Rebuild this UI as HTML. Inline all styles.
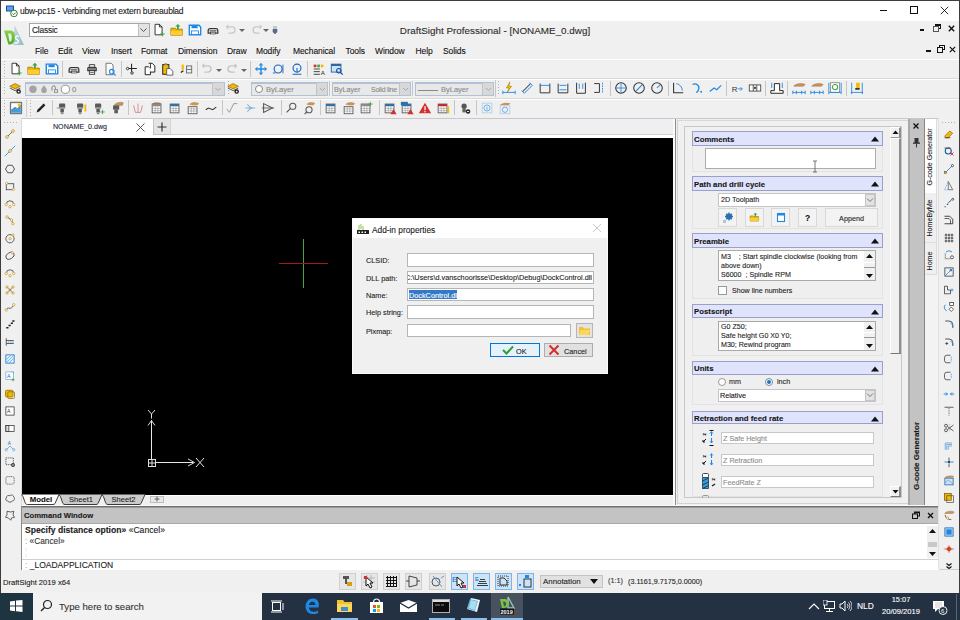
<!DOCTYPE html>
<html><head><meta charset="utf-8">
<style>
*{margin:0;padding:0;box-sizing:border-box}
html,body{width:960px;height:620px;overflow:hidden;background:#f0f0f0;font-family:"Liberation Sans",sans-serif;color:#000}
.a{position:absolute;display:block}
.t{position:absolute;white-space:nowrap;line-height:1;-webkit-text-stroke:0.1px currentColor}
</style></head><body>

<div class="a" style="left:0px;top:0px;width:960px;height:1px;background:#3c3c3c"></div>
<div class="a" style="left:0px;top:0px;width:1px;height:593px;background:#3c3c3c"></div>
<div class="a" style="left:959px;top:0px;width:1px;height:593px;background:#3c3c3c"></div>
<div class="a" style="left:1px;top:1px;width:958px;height:20px;background:#fff"></div>
<svg class="a" style="left:5px;top:5px;" width="13" height="12" viewBox="0 0 13 12"><rect x="1" y="0.5" width="8" height="6" fill="#1f4fa0"/><rect x="2" y="1.5" width="6" height="4" fill="#5aa0e8"/><circle cx="9" cy="8.5" r="3.3" fill="#fff" stroke="#2e7d32" stroke-width="1"/><path d="M7.5 8.5l1.2 1.2 2-2" stroke="#2e7d32" fill="none"/></svg>
<div class="t" style="left:20px;top:6.74px;font-size:8.5px;color:#1a1a1a;letter-spacing:-0.2px">ubw-pc15 - Verbinding met extern bureaublad</div>
<div class="a" style="left:880px;top:10px;width:7px;height:1px;background:#111"></div>
<div class="a" style="left:910px;top:6px;width:8px;height:8px;border:1px solid #111"></div>
<svg class="a" style="left:940px;top:6px;" width="9" height="9" viewBox="0 0 9 9"><path d="M.8 .8l7.4 7.4M8.2 .8L.8 8.2" stroke="#111" stroke-width=".9"/></svg>
<svg class="a" style="left:0px;top:20px;" width="30" height="30" viewBox="0 0 30 30"><defs><linearGradient id="tg" x1="0" y1="0" x2="1" y2="1"><stop offset="0" stop-color="#c4dde2"/><stop offset="1" stop-color="#8fbcc6"/></linearGradient><linearGradient id="dg" x1="0" y1="0" x2="0" y2="1"><stop offset="0" stop-color="#8fd14f"/><stop offset="1" stop-color="#4fa82a"/></linearGradient></defs><path d="M14.5 5L24 25H13.5z" fill="url(#tg)"/><path d="M4 10.5h7c3.5.5 4.5 5 3.8 9-.5 3-2.3 5-5.3 5H8.5z" fill="url(#dg)"/><path d="M8 13.5h2.2c1.8.5 2 5 .8 8H9.5z" fill="#e8f5d8"/><path d="M19 16.5c-1.5-1-4-.5-3.5 1.5s3.5 1.5 3 3.5-3 2-4 1" fill="none" stroke="#eef6f8" stroke-width="1.6"/></svg>
<div class="a" style="left:29px;top:23px;width:121px;height:14px;background:#fff;border:1px solid #a6a6a6"></div>
<div class="a" style="left:138px;top:24px;width:11px;height:12px;background:#e3e3e3;border-left:1px solid #c0c0c0"></div>
<svg class="a" style="left:139px;top:26px;" width="9" height="8" viewBox="0 0 9 8"><path d="M1.5 2.5l3 3 3-3" fill="none" stroke="#555"/></svg>
<div class="t" style="left:32px;top:26.48px;font-size:8.4px;color:#1a1a1a;letter-spacing:-0.2px">Classic</div>
<svg class="a" style="left:152px;top:23px;" width="14" height="14" viewBox="0 0 14 14"><g transform="scale(.875)"><path d="M3.5 1.5h5l3 3v9h-8z" fill="#fff" stroke="#222"/><path d="M8.5 1.5v3h3" fill="none" stroke="#222"/><path d="M12 10v5M9.5 12.5h5" stroke="#43a047" stroke-width="1.2"/></g></svg>
<svg class="a" style="left:170px;top:23px;" width="14" height="14" viewBox="0 0 14 14"><g transform="scale(.875)"><path d="M1 6h5l1 1h7v7H1z" fill="#f5b800" stroke="#8a6d00" stroke-width=".8"/><path d="M1 9h13v5H1z" fill="#ffcc33"/><path d="M9 1l3 3h-2v3H8V4H6z" fill="#43a047"/></g></svg>
<svg class="a" style="left:188px;top:23px;" width="14" height="14" viewBox="0 0 14 14"><g transform="scale(.875)"><path d="M1.5 2.5h11l2 2v9h-13z" fill="#fff" stroke="#1e88e5" stroke-width="1.6"/><rect x="4" y="3" width="7" height="3" fill="#1e88e5"/><rect x="4" y="9" width="8" height="4" fill="#fff" stroke="#1e88e5"/></g></svg>
<svg class="a" style="left:206px;top:23px;" width="14" height="14" viewBox="0 0 14 14"><g transform="scale(.875)"><path d="M4.5 6.5h7a2 2 0 0 1 2 2v3h-11v-3a2 2 0 0 1 2-2z" fill="#fff" stroke="#333" stroke-width="1.4"/><path d="M4 9h8" stroke="#333" stroke-width="1.2"/><rect x="5" y="10.5" width="6" height="2" fill="#fff" stroke="#333" stroke-width=".8"/></g></svg>
<svg class="a" style="left:224px;top:23px;" width="12" height="14" viewBox="0 0 12 14"><g transform="scale(.875)"><path d="M5 4.5h4a3.5 3.5 0 0 1 0 7H5" fill="none" stroke="#c8c8c8" stroke-width="1.5"/><path d="M2 4.5l3-3v6z" fill="#c8c8c8"/></g></svg>
<svg class="a" style="left:238px;top:26px;" width="8" height="8" viewBox="0 0 8 8"><path d="M1 3h6l-3 3z" fill="#666"/></svg>
<svg class="a" style="left:250px;top:23px;" width="12" height="14" viewBox="0 0 12 14"><g transform="scale(.875)"><path d="M11 4.5H7a3.5 3.5 0 0 0 0 7h4" fill="none" stroke="#c8c8c8" stroke-width="1.5"/><path d="M14 4.5l-3-3v6z" fill="#c8c8c8"/></g></svg>
<svg class="a" style="left:262px;top:26px;" width="8" height="8" viewBox="0 0 8 8"><path d="M1 3h6l-3 3z" fill="#666"/></svg>
<svg class="a" style="left:272px;top:26px;" width="6" height="9" viewBox="0 0 6 9"><path d="M1 1h4M1 3h4v3l-2 2-2-2z" fill="#5a6a8a" stroke="#5a6a8a" stroke-width=".6"/></svg>
<div class="t" style="left:495px;top:26.15px;font-size:9.9px;transform:translateX(-50%);color:#2b2b2b">DraftSight Professional - [NONAME_0.dwg]</div>
<div class="a" style="left:920px;top:29px;width:4px;height:2px;background:#111"></div>
<svg class="a" style="left:933px;top:24px;" width="8" height="8" viewBox="0 0 8 8"><rect x="2.5" y="0.5" width="5" height="4" fill="none" stroke="#111"/><rect x="0.5" y="2.5" width="5" height="5" fill="#f0f0f0" stroke="#555"/><rect x="2.5" y="0.5" width="5" height="1.5" fill="#111"/></svg>
<svg class="a" style="left:948px;top:25px;" width="7" height="7" viewBox="0 0 7 7"><path d="M.8 .8l5.4 5.4M6.2 .8L.8 6.2" stroke="#111" stroke-width="1.4"/></svg>
<div class="t" style="left:35px;top:47.13px;font-size:8.5px;color:#111;letter-spacing:-0.1px">File</div>
<div class="t" style="left:58px;top:47.13px;font-size:8.5px;color:#111;letter-spacing:-0.1px">Edit</div>
<div class="t" style="left:82px;top:47.13px;font-size:8.5px;color:#111;letter-spacing:-0.1px">View</div>
<div class="t" style="left:111px;top:47.13px;font-size:8.5px;color:#111;letter-spacing:-0.1px">Insert</div>
<div class="t" style="left:141px;top:47.13px;font-size:8.5px;color:#111;letter-spacing:-0.1px">Format</div>
<div class="t" style="left:178px;top:47.13px;font-size:8.5px;color:#111;letter-spacing:-0.1px">Dimension</div>
<div class="t" style="left:227px;top:47.13px;font-size:8.5px;color:#111;letter-spacing:-0.1px">Draw</div>
<div class="t" style="left:256px;top:47.13px;font-size:8.5px;color:#111;letter-spacing:-0.1px">Modify</div>
<div class="t" style="left:293px;top:47.13px;font-size:8.5px;color:#111;letter-spacing:-0.1px">Mechanical</div>
<div class="t" style="left:345.5px;top:47.13px;font-size:8.5px;color:#111;letter-spacing:-0.1px">Tools</div>
<div class="t" style="left:375px;top:47.13px;font-size:8.5px;color:#111;letter-spacing:-0.1px">Window</div>
<div class="t" style="left:415.5px;top:47.13px;font-size:8.5px;color:#111;letter-spacing:-0.1px">Help</div>
<div class="t" style="left:443px;top:47.13px;font-size:8.5px;color:#111;letter-spacing:-0.1px">Solids</div>
<div class="a" style="left:926px;top:50px;width:5px;height:2px;background:#111"></div>
<svg class="a" style="left:937px;top:45px;" width="8" height="8" viewBox="0 0 8 8"><rect x="2.5" y="0.5" width="5" height="4" fill="none" stroke="#111"/><rect x="0.5" y="2.5" width="5" height="5" fill="#f0f0f0" stroke="#111"/></svg>
<svg class="a" style="left:949px;top:46px;" width="7" height="7" viewBox="0 0 7 7"><path d="M.8 .8l5.4 5.4M6.2 .8L.8 6.2" stroke="#111" stroke-width="1.2"/></svg>
<div class="a" style="left:1px;top:59px;width:958px;height:1px;background:#fff"></div>
<div class="a" style="left:1px;top:78px;width:958px;height:1px;background:#d9d9d9"></div>
<div class="a" style="left:1px;top:79px;width:958px;height:1px;background:#fff"></div>
<div class="a" style="left:1px;top:98px;width:958px;height:1px;background:#d9d9d9"></div>
<div class="a" style="left:1px;top:99px;width:958px;height:1px;background:#fff"></div>
<div class="a" style="left:1px;top:118px;width:958px;height:1px;background:#c8c8c8"></div>
<div class="a" style="left:4px;top:61px;width:1px;height:16px;background:repeating-linear-gradient(#b0b0b0 0 1px,transparent 1px 3px)"></div>
<svg class="a" style="left:8px;top:61px;" width="16" height="16" viewBox="0 0 16 16"><g transform="translate(8 8) scale(0.88) translate(-8 -8)"><path d="M3.5 1.5h5l3 3v9h-8z" fill="#fff" stroke="#222"/><path d="M8.5 1.5v3h3" fill="none" stroke="#222"/><path d="M12 10v5M9.5 12.5h5" stroke="#43a047" stroke-width="1.2"/></g></svg>
<svg class="a" style="left:26px;top:61px;" width="16" height="16" viewBox="0 0 16 16"><g transform="translate(8 8) scale(0.88) translate(-8 -8)"><path d="M1 6h5l1 1h7v7H1z" fill="#f5b800" stroke="#8a6d00" stroke-width=".8"/><path d="M1 9h13v5H1z" fill="#ffcc33"/><path d="M9 1l3 3h-2v3H8V4H6z" fill="#43a047"/></g></svg>
<svg class="a" style="left:44px;top:61px;" width="16" height="16" viewBox="0 0 16 16"><g transform="translate(8 8) scale(0.88) translate(-8 -8)"><path d="M1.5 2.5h11l2 2v9h-13z" fill="#fff" stroke="#1e88e5" stroke-width="1.6"/><rect x="4" y="3" width="7" height="3" fill="#1e88e5"/><rect x="4" y="9" width="8" height="4" fill="#fff" stroke="#1e88e5"/></g></svg>
<div class="a" style="left:62px;top:61px;width:1px;height:16px;background:#c6c6c6"></div>
<svg class="a" style="left:66px;top:61px;" width="16" height="16" viewBox="0 0 16 16"><g transform="translate(8 8) scale(0.88) translate(-8 -8)"><path d="M4.5 6.5h7a2 2 0 0 1 2 2v3h-11v-3a2 2 0 0 1 2-2z" fill="#fff" stroke="#333" stroke-width="1.4"/><path d="M4 9h8" stroke="#333" stroke-width="1.2"/><rect x="5" y="10.5" width="6" height="2" fill="#fff" stroke="#333" stroke-width=".8"/></g></svg>
<svg class="a" style="left:84px;top:61px;" width="16" height="16" viewBox="0 0 16 16"><g transform="translate(8 8) scale(0.88) translate(-8 -8)"><path d="M4.5 5.5h7a2 2 0 0 1 2 2v3h-11v-3a2 2 0 0 1 2-2z" fill="#3a3a3a"/><path d="M5 5.5V3h6v2.5" fill="none" stroke="#333"/><path d="M3.5 8h9" stroke="#fff" stroke-width=".8"/><rect x="5" y="10" width="6" height="4" fill="#fff" stroke="#333"/><path d="M6 12h4" stroke="#333" stroke-width=".8"/></g></svg>
<svg class="a" style="left:102px;top:61px;" width="16" height="16" viewBox="0 0 16 16"><g transform="translate(8 8) scale(0.88) translate(-8 -8)"><path d="M3.5 1.5h6l2 2v11h-8z" fill="#fff" stroke="#666"/><circle cx="10" cy="11" r="2.6" fill="none" stroke="#1e88e5" stroke-width="1.2"/><path d="M12 13l2.5 2.5" stroke="#1e88e5" stroke-width="1.3"/></g></svg>
<div class="a" style="left:121px;top:61px;width:1px;height:16px;background:#c6c6c6"></div>
<svg class="a" style="left:124px;top:61px;" width="16" height="16" viewBox="0 0 16 16"><g transform="translate(8 8) scale(0.88) translate(-8 -8)"><path d="M7.5 2v9M2.5 7.5h11" stroke="#222" stroke-width="1.2"/><circle cx="3" cy="7.5" r="1.4" fill="#fff" stroke="#222"/><circle cx="8" cy="12.5" r="1.4" fill="#fff" stroke="#222"/></g></svg>
<svg class="a" style="left:142px;top:61px;" width="16" height="16" viewBox="0 0 16 16"><g transform="translate(8 8) scale(0.88) translate(-8 -8)"><path d="M2.5 5.5h4l2 2v7h-6z" fill="#fff" stroke="#222" stroke-width="1.1"/><path d="M6.5 1.5h4l3 3v7h-5" fill="#fff" stroke="#222" stroke-width="1.1"/><path d="M8.5 7.5v-6" stroke="#222"/></g></svg>
<svg class="a" style="left:160px;top:61px;" width="16" height="16" viewBox="0 0 16 16"><g transform="translate(8 8) scale(0.88) translate(-8 -8)"><rect x="2" y="3" width="7" height="11" fill="#f5b800" stroke="#222" stroke-width="1.1"/><rect x="4" y="1.5" width="3" height="2" fill="#888"/><path d="M6.5 7.5h4l3 3v4.5h-7z" fill="#fff" stroke="#555" stroke-width="1"/></g></svg>
<svg class="a" style="left:178px;top:61px;" width="16" height="16" viewBox="0 0 16 16"><g transform="translate(8 8) scale(0.88) translate(-8 -8)"><rect x="3" y="3" width="2.5" height="6" fill="#f5b800"/><path d="M2 12l3-2" stroke="#222" stroke-width="1.5"/><rect x="8.5" y="4.5" width="6" height="8" fill="#eee" stroke="#666"/><path d="M8.5 8.5h6" stroke="#666"/></g></svg>
<div class="a" style="left:197px;top:61px;width:1px;height:16px;background:#c6c6c6"></div>
<svg class="a" style="left:199px;top:61px;" width="16" height="16" viewBox="0 0 16 16"><g transform="translate(8 8) scale(0.88) translate(-8 -8)"><path d="M5 4.5h4a3.5 3.5 0 0 1 0 7H5" fill="none" stroke="#c3c3c3" stroke-width="1.5"/><path d="M2 4.5l3-3v6z" fill="#c3c3c3"/></g></svg>
<svg class="a" style="left:215px;top:66px;" width="8" height="8" viewBox="0 0 8 8"><path d="M1 3h6l-3 3z" fill="#666"/></svg>
<svg class="a" style="left:224px;top:61px;" width="16" height="16" viewBox="0 0 16 16"><g transform="translate(8 8) scale(0.88) translate(-8 -8)"><path d="M11 4.5H7a3.5 3.5 0 0 0 0 7h4" fill="none" stroke="#c3c3c3" stroke-width="1.5"/><path d="M14 4.5l-3-3v6z" fill="#c3c3c3"/></g></svg>
<svg class="a" style="left:240px;top:66px;" width="8" height="8" viewBox="0 0 8 8"><path d="M1 3h6l-3 3z" fill="#666"/></svg>
<div class="a" style="left:250px;top:61px;width:1px;height:16px;background:#c6c6c6"></div>
<svg class="a" style="left:253px;top:61px;" width="16" height="16" viewBox="0 0 16 16"><g transform="translate(8 8) scale(0.88) translate(-8 -8)"><path d="M8 1l2.5 3h-5zM8 15l2.5-3h-5zM1 8l3-2.5v5zM15 8l-3-2.5v5z" fill="#1e88e5"/><path d="M8 4v8M4 8h8" stroke="#1e88e5" stroke-width="1.6"/></g></svg>
<svg class="a" style="left:271px;top:61px;" width="16" height="16" viewBox="0 0 16 16"><g transform="translate(8 8) scale(0.88) translate(-8 -8)"><circle cx="7" cy="8" r="4.5" fill="none" stroke="#1565c0" stroke-width="1.3"/><path d="M12.5 3v10M1 12.5h3" stroke="#1565c0"/></g></svg>
<svg class="a" style="left:289px;top:61px;" width="16" height="16" viewBox="0 0 16 16"><g transform="translate(8 8) scale(0.88) translate(-8 -8)"><circle cx="8" cy="7" r="4.5" fill="none" stroke="#1565c0" stroke-width="1.3"/><path d="M3 14h10M8 7v4" stroke="#1565c0" stroke-width="1.2"/></g></svg>
<div class="a" style="left:307px;top:61px;width:1px;height:16px;background:#c6c6c6"></div>
<svg class="a" style="left:311px;top:61px;" width="16" height="16" viewBox="0 0 16 16"><g transform="translate(8 8) scale(0.88) translate(-8 -8)"><rect x="2" y="3" width="3" height="3" fill="#d32f2f"/><rect x="6" y="3" width="3" height="3" fill="#43a047"/><rect x="10" y="3" width="3" height="3" fill="#f5b800"/><path d="M2 8h7M2 11h7M2 14h7" stroke="#333"/><text x="10" y="15" font-size="7" font-family="Liberation Sans" fill="#222">A</text></g></svg>
<svg class="a" style="left:329px;top:61px;" width="16" height="16" viewBox="0 0 16 16"><g transform="translate(8 8) scale(0.88) translate(-8 -8)"><rect x="1.5" y="2.5" width="11" height="9" fill="#cfe3f7" stroke="#1f5f9f"/><rect x="1.5" y="2.5" width="11" height="2" fill="#1f5f9f"/><circle cx="10" cy="10" r="2.5" fill="none" stroke="#0d47a1" stroke-width="1.2"/><path d="M12 12l2.5 2.5" stroke="#0d47a1" stroke-width="1.3"/></g></svg>
<div class="a" style="left:4px;top:81px;width:1px;height:15px;background:repeating-linear-gradient(#b0b0b0 0 1px,transparent 1px 3px)"></div>
<svg class="a" style="left:8px;top:80px;" width="16" height="16" viewBox="0 0 16 16"><g transform="translate(8 8) scale(0.88) translate(-8 -8)"><path d="M1 6l6-3 6 3-6 3z" fill="#f5b800" stroke="#7a5c00" stroke-width=".7"/><path d="M1 8l6 3 6-3" fill="none" stroke="#444"/><circle cx="11" cy="12" r="2.6" fill="#222"/><circle cx="11" cy="12" r="1" fill="#fff"/></g></svg>
<div class="a" style="left:25px;top:82px;width:200px;height:14px;background:#e8e8e8;border:1px solid #b2c2d6;border-top-width:2px"></div>
<div class="a" style="left:212px;top:83px;width:12px;height:12px;background:#d8d8d8;border-left:1px solid #c3c3c3"></div>
<svg class="a" style="left:213px;top:85px;" width="10" height="8" viewBox="0 0 10 8"><path d="M2.5 3l2.5 2.5L7.5 3" fill="none" stroke="#aaa"/></svg>
<svg class="a" style="left:27px;top:83px;" width="45" height="12" viewBox="0 0 45 12"><circle cx="6" cy="6.3" r="3.7" fill="#a3a3a3"/><path d="M17 2.3c-2 2.5-2.8 3.6-2.8 5a2.8 2.8 0 0 0 5.6 0c0-1.4-.8-2.5-2.8-5z" fill="#a3a3a3"/><path d="M25 7.5V4.5a1.7 1.7 0 0 1 3.4 0v1.5" fill="none" stroke="#777" stroke-width=".9"/><rect x="27" y="6.2" width="4" height="3.6" fill="#8a8a8a"/><rect x="27.8" y="7" width="2.4" height="2" fill="#ddd"/><circle cx="38.4" cy="6.3" r="4.1" fill="#fff" stroke="#888" stroke-width=".9"/></svg>
<div class="t" style="left:72px;top:86.08px;font-size:7.8px;color:#888">0</div>
<div class="a" style="left:228px;top:81px;width:1px;height:15px;background:repeating-linear-gradient(#b0b0b0 0 1px,transparent 1px 3px)"></div>
<svg class="a" style="left:226px;top:80px;" width="16" height="16" viewBox="0 0 16 16"><g transform="translate(8 8) scale(0.88) translate(-8 -8)"><path d="M1 6l6-3 6 3-6 3z" fill="#f5b800" stroke="#7a5c00" stroke-width=".7"/><path d="M1 8l6 3 6-3" fill="none" stroke="#444"/><circle cx="11" cy="12" r="2.6" fill="#222"/><circle cx="11" cy="12" r="1" fill="#fff"/></g></svg>
<div class="a" style="left:251px;top:82px;width:77px;height:14px;background:#e8e8e8;border:1px solid #b2c2d6;border-top-width:2px"></div>
<div class="a" style="left:316px;top:83px;width:11px;height:12px;background:#d8d8d8;border-left:1px solid #c3c3c3"></div>
<svg class="a" style="left:254px;top:84px;" width="10" height="10" viewBox="0 0 10 10"><circle cx="5" cy="5" r="3.5" fill="#fff" stroke="#888"/></svg>
<div class="t" style="left:266px;top:86.18px;font-size:7.6px;color:#888">ByLayer</div>
<div class="a" style="left:332px;top:82px;width:79px;height:14px;background:#e8e8e8;border:1px solid #b2c2d6;border-top-width:2px"></div>
<div class="a" style="left:399px;top:83px;width:11px;height:12px;background:#d8d8d8;border-left:1px solid #c3c3c3"></div>
<div class="t" style="left:334px;top:86.37px;font-size:7.2px;color:#888">ByLayer</div>
<div class="t" style="left:371px;top:86.47px;font-size:7.0px;color:#888;letter-spacing:-0.25px">Solid line</div>
<div class="a" style="left:415px;top:82px;width:79px;height:14px;background:#e8e8e8;border:1px solid #b2c2d6;border-top-width:2px"></div>
<div class="a" style="left:482px;top:83px;width:11px;height:12px;background:#d8d8d8;border-left:1px solid #c3c3c3"></div>
<div class="a" style="left:418px;top:90px;width:20px;height:1px;background:#888"></div>
<div class="t" style="left:441px;top:86.23px;font-size:7.5px;color:#888">ByLayer</div>
<svg class="a" style="left:318px;top:85px;" width="9" height="8" viewBox="0 0 9 8"><path d="M2 3l2.5 2.5L7 3" fill="none" stroke="#aaa"/></svg>
<svg class="a" style="left:401px;top:85px;" width="9" height="8" viewBox="0 0 9 8"><path d="M2 3l2.5 2.5L7 3" fill="none" stroke="#aaa"/></svg>
<svg class="a" style="left:484px;top:85px;" width="9" height="8" viewBox="0 0 9 8"><path d="M2 3l2.5 2.5L7 3" fill="none" stroke="#aaa"/></svg>
<div class="a" style="left:329px;top:81px;width:1px;height:15px;background:#c6c6c6"></div>
<div class="a" style="left:412px;top:81px;width:1px;height:15px;background:#c6c6c6"></div>
<div class="a" style="left:495px;top:80px;width:1px;height:17px;background:#c6c6c6"></div>
<div class="a" style="left:498px;top:81px;width:1px;height:15px;background:repeating-linear-gradient(#b0b0b0 0 1px,transparent 1px 3px)"></div>
<svg class="a" style="left:501px;top:80px;" width="16" height="16" viewBox="0 0 16 16"><g transform="translate(8 8) scale(0.88) translate(-8 -8)"><path d="M9 1L5 8h3l-2 5 5-7H8z" fill="#f5b800" stroke="#8a6d00" stroke-width=".5"/><path d="M1 13h14M1 11v4M15 11v4" stroke="#1e88e5"/></g></svg>
<svg class="a" style="left:519px;top:80px;" width="16" height="16" viewBox="0 0 16 16"><g transform="translate(8 8) scale(0.88) translate(-8 -8)"><path d="M3 12L12 3" stroke="#555" stroke-width="1.2"/><path d="M5 14l9-9M2 11l3 3M11 2l3 3" stroke="#1e88e5" stroke-width="1.1"/></g></svg>
<svg class="a" style="left:537px;top:80px;" width="16" height="16" viewBox="0 0 16 16"><g transform="translate(8 8) scale(0.88) translate(-8 -8)"><path d="M2.5 3v10.5h11V3" fill="none" stroke="#333" stroke-width="1.1"/><path d="M3 5h10M3 4v2M13 4v2" stroke="#1e88e5"/></g></svg>
<svg class="a" style="left:555px;top:80px;" width="16" height="16" viewBox="0 0 16 16"><g transform="translate(8 8) scale(0.88) translate(-8 -8)"><path d="M2.5 3v10.5h11V3" fill="none" stroke="#333" stroke-width="1.1"/><path d="M4 5h8M4 10h8" stroke="#1e88e5"/></g></svg>
<svg class="a" style="left:573px;top:80px;" width="16" height="16" viewBox="0 0 16 16"><g transform="translate(8 8) scale(0.88) translate(-8 -8)"><path d="M3 2v12h10V2" fill="none" stroke="#333" stroke-width="1.1"/><path d="M6 3v6M10 3v6" stroke="#1e88e5"/></g></svg>
<svg class="a" style="left:591px;top:80px;" width="16" height="16" viewBox="0 0 16 16"><g transform="translate(8 8) scale(0.88) translate(-8 -8)"><path d="M2.5 3h6v10h-6" fill="none" stroke="#333" stroke-width="1.1"/><path d="M12 2v12" stroke="#1e88e5" stroke-dasharray="2 1"/></g></svg>
<div class="a" style="left:610px;top:81px;width:1px;height:15px;background:#c6c6c6"></div>
<svg class="a" style="left:613px;top:80px;" width="16" height="16" viewBox="0 0 16 16"><g transform="translate(8 8) scale(0.88) translate(-8 -8)"><circle cx="8" cy="8" r="6" fill="none" stroke="#333" stroke-width="1.2"/><path d="M8 2.5v11M2.5 8h11" stroke="#1e88e5" stroke-width="1"/></g></svg>
<svg class="a" style="left:631px;top:80px;" width="16" height="16" viewBox="0 0 16 16"><g transform="translate(8 8) scale(0.88) translate(-8 -8)"><circle cx="8" cy="8" r="6" fill="none" stroke="#333" stroke-width="1.2"/><path d="M4.5 11.5l7-7" stroke="#1e88e5" stroke-width="1.2"/></g></svg>
<svg class="a" style="left:649px;top:80px;" width="16" height="16" viewBox="0 0 16 16"><g transform="translate(8 8) scale(0.88) translate(-8 -8)"><circle cx="8" cy="8" r="6" fill="none" stroke="#333" stroke-width="1.2"/><path d="M8 8l3.5-3.5" stroke="#1e88e5" stroke-width="1.2"/></g></svg>
<div class="a" style="left:668px;top:81px;width:1px;height:15px;background:#c6c6c6"></div>
<svg class="a" style="left:670px;top:80px;" width="16" height="16" viewBox="0 0 16 16"><g transform="translate(8 8) scale(0.88) translate(-8 -8)"><path d="M3 2v11.5h11" fill="none" stroke="#333" stroke-width="1.2"/><path d="M6 3a9 9 0 0 1 7 8" fill="none" stroke="#1e88e5"/></g></svg>
<svg class="a" style="left:689px;top:80px;" width="16" height="16" viewBox="0 0 16 16"><g transform="translate(8 8) scale(0.88) translate(-8 -8)"><path d="M3 4c4-2 8 1 7 5s-3 4-3 4" fill="none" stroke="#1e88e5" stroke-width="1.5"/><path d="M11 12l3-1-1 3z" fill="#1e88e5"/></g></svg>
<svg class="a" style="left:707px;top:80px;" width="16" height="16" viewBox="0 0 16 16"><g transform="translate(8 8) scale(0.88) translate(-8 -8)"><path d="M2 12l5-4 3 2 5-5" fill="none" stroke="#1e88e5" stroke-width="1.3"/></g></svg>
<div class="a" style="left:726px;top:81px;width:1px;height:15px;background:#c6c6c6"></div>
<svg class="a" style="left:729px;top:80px;" width="16" height="16" viewBox="0 0 16 16"><g transform="translate(8 8) scale(0.88) translate(-8 -8)"><text x="2" y="12" font-size="9" font-family="Liberation Sans" fill="#333">R</text><path d="M9 9h5M12 7l2 2-2 2" fill="none" stroke="#1e88e5"/></g></svg>
<svg class="a" style="left:747px;top:80px;" width="16" height="16" viewBox="0 0 16 16"><g transform="translate(8 8) scale(0.88) translate(-8 -8)"><rect x="1.5" y="4.5" width="13" height="7" fill="#fff" stroke="#444"/><path d="M6 4.5v7M10 4.5v7" stroke="#444"/><circle cx="8" cy="8" r="1.3" fill="#444"/></g></svg>
<div class="a" style="left:765px;top:81px;width:1px;height:15px;background:#c6c6c6"></div>
<svg class="a" style="left:769px;top:80px;" width="16" height="16" viewBox="0 0 16 16"><g transform="translate(8 8) scale(0.88) translate(-8 -8)"><path d="M1 14h14v-3h-4V3H5v8H1z" fill="#fff" stroke="#222" stroke-width="1.1"/><path d="M2 2v6M14 2v6" stroke="#1e88e5"/></g></svg>
<div class="a" style="left:787px;top:81px;width:1px;height:15px;background:#c6c6c6"></div>
<svg class="a" style="left:791px;top:80px;" width="16" height="16" viewBox="0 0 16 16"><g transform="translate(8 8) scale(0.88) translate(-8 -8)"><path d="M2 6c2-3 9-4 13-2l-2 2H7z" fill="#c9935a" stroke="#8d6a3e" stroke-width=".5"/><path d="M1 13h14M1 11v4M15 11v4M5 11v4M11 11v4" stroke="#1e88e5"/></g></svg>
<svg class="a" style="left:809px;top:80px;" width="16" height="16" viewBox="0 0 16 16"><g transform="translate(8 8) scale(0.88) translate(-8 -8)"><path d="M2 6c2-3 9-4 13-2l-2 2H7z" fill="#c9935a" stroke="#8d6a3e" stroke-width=".5"/><path d="M1 13h14M1 11v4M15 11v4M5 11v4M11 11v4" stroke="#1e88e5"/></g></svg>
<svg class="a" style="left:827px;top:80px;" width="16" height="16" viewBox="0 0 16 16"><g transform="translate(8 8) scale(0.88) translate(-8 -8)"><rect x="3" y="2" width="10" height="11" fill="#fff" stroke="#888"/><circle cx="8" cy="7" r="3" fill="none" stroke="#43a047" stroke-width="1.2"/><path d="M1 13h14M1 2v13M15 2v13" stroke="#1e88e5"/></g></svg>
<div class="a" style="left:846px;top:81px;width:1px;height:15px;background:#c6c6c6"></div>
<svg class="a" style="left:849px;top:80px;" width="16" height="16" viewBox="0 0 16 16"><g transform="translate(8 8) scale(0.88) translate(-8 -8)"><rect x="7" y="2" width="4" height="6" fill="#f5b800"/><rect x="6" y="8" width="5" height="2" fill="#333"/><path d="M1 13h14M2 2v13M14 2v13" stroke="#1e88e5"/></g></svg>
<div class="a" style="left:4px;top:100px;width:1px;height:16px;background:repeating-linear-gradient(#b0b0b0 0 1px,transparent 1px 3px)"></div>
<svg class="a" style="left:8px;top:100px;" width="16" height="16" viewBox="0 0 16 16"><g transform="translate(8 8) scale(0.88) translate(-8 -8)"><rect x="1" y="1" width="14" height="14" rx="1" fill="#777"/><rect x="2.5" y="2.5" width="11" height="11" fill="#fff"/><path d="M2.5 13.5V10l4-3 3 2 4-5v9.5z" fill="#3da0dc"/><path d="M2.5 12l5-5 2 2 4-4" stroke="#777" fill="none"/><rect x="10" y="3" width="3" height="3" fill="#f2c200"/></g></svg>
<div class="a" style="left:26px;top:99px;width:1px;height:18px;background:#d0d0d0"></div>
<div class="a" style="left:30px;top:100px;width:1px;height:16px;background:repeating-linear-gradient(#b0b0b0 0 1px,transparent 1px 3px)"></div>
<svg class="a" style="left:33px;top:100px;" width="16" height="16" viewBox="0 0 16 16"><g transform="translate(8 8) scale(0.88) translate(-8 -8)"><path d="M3 13l1-3 7-7 2 2-7 7z" fill="#222"/></g></svg>
<div class="a" style="left:52px;top:100px;width:1px;height:15px;background:#c6c6c6"></div>
<svg class="a" style="left:55px;top:100px;" width="16" height="16" viewBox="0 0 16 16"><g transform="translate(8 8) scale(0.88) translate(-8 -8)"><rect x="3.5" y="3" width="7" height="5" rx="1" fill="#5a5a5a"/><rect x="3.5" y="7" width="7" height="2" fill="#9a9a9a"/><rect x="5" y="9" width="4" height="4" fill="#5a5a5a"/><rect x="5.5" y="13" width="3" height="2" fill="#888"/><path d="M1 8h3" stroke="#c66"/></g></svg>
<svg class="a" style="left:73px;top:100px;" width="16" height="16" viewBox="0 0 16 16"><g transform="translate(8 8) scale(0.88) translate(-8 -8)"><rect x="3.5" y="3" width="7" height="5" rx="1" fill="#5a5a5a"/><rect x="3.5" y="7" width="7" height="2" fill="#9a9a9a"/><rect x="5" y="9" width="4" height="4" fill="#5a5a5a"/><rect x="5.5" y="13" width="3" height="2" fill="#888"/><rect x="12" y="4" width="2" height="8" fill="#f5b800"/></g></svg>
<svg class="a" style="left:91px;top:100px;" width="16" height="16" viewBox="0 0 16 16"><g transform="translate(8 8) scale(0.88) translate(-8 -8)"><rect x="3.5" y="3" width="7" height="5" rx="1" fill="#5a5a5a"/><rect x="3.5" y="7" width="7" height="2" fill="#9a9a9a"/><rect x="5" y="9" width="4" height="4" fill="#5a5a5a"/><rect x="5.5" y="13" width="3" height="2" fill="#888"/><path d="M12 10v5M9.5 12.5h5" stroke="#43a047"/></g></svg>
<svg class="a" style="left:109px;top:100px;" width="16" height="16" viewBox="0 0 16 16"><g transform="translate(8 8) scale(0.88) translate(-8 -8)"><rect x="3.5" y="5" width="7" height="5" rx="1" fill="#5a5a5a"/><rect x="5" y="10" width="4" height="4" fill="#5a5a5a"/><path d="M5 5c1-3 6-4 10-3l-1 3H9z" fill="#c9935a" stroke="#8d6a3e" stroke-width=".6"/></g></svg>
<div class="a" style="left:128px;top:100px;width:1px;height:15px;background:#c6c6c6"></div>
<svg class="a" style="left:130px;top:100px;" width="16" height="16" viewBox="0 0 16 16"><g transform="translate(8 8) scale(0.88) translate(-8 -8)"><path d="M3 5l2 8h6l2-8" fill="none" stroke="#c88"/><path d="M8 3v10" stroke="#c88"/></g></svg>
<svg class="a" style="left:149px;top:100px;" width="16" height="16" viewBox="0 0 16 16"><g transform="translate(8 8) scale(0.88) translate(-8 -8)"><path d="M2 4c2-3 8-3 11-1l-2 2H6z" fill="#c9935a"/><rect x="2.5" y="3.5" width="10" height="10" fill="#fff" stroke="#555"/><rect x="2.5" y="3.5" width="10" height="2.5" fill="#888"/><path d="M2.5 8.5h10M2.5 11h10M6 6v7.5M9 6v7.5" stroke="#888" stroke-width=".6"/></g></svg>
<svg class="a" style="left:167px;top:100px;" width="16" height="16" viewBox="0 0 16 16"><g transform="translate(8 8) scale(0.88) translate(-8 -8)"><rect x="2.5" y="3.5" width="10" height="10" fill="#fff" stroke="#555"/><rect x="2.5" y="3.5" width="10" height="2.5" fill="#2f6fa8"/><path d="M2.5 8.5h10M2.5 11h10M6 6v7.5M9 6v7.5" stroke="#888" stroke-width=".6"/></g></svg>
<svg class="a" style="left:185px;top:100px;" width="16" height="16" viewBox="0 0 16 16"><g transform="translate(8 8) scale(0.88) translate(-8 -8)"><path d="M4 4c2-3 8-3 11-1l-2 2H8z" fill="#c9935a"/><rect x="2.5" y="6.5" width="10" height="8" fill="#fff" stroke="#555"/><path d="M2.5 9h10M2.5 11.5h10M6 6.5v8M9 6.5v8" stroke="#888" stroke-width=".6"/></g></svg>
<svg class="a" style="left:203px;top:100px;" width="16" height="16" viewBox="0 0 16 16"><g transform="translate(8 8) scale(0.88) translate(-8 -8)"><path d="M2 10l3-2 5 2 4-3" fill="none" stroke="#333" stroke-width="1.2"/></g></svg>
<div class="a" style="left:222px;top:100px;width:1px;height:15px;background:#c6c6c6"></div>
<svg class="a" style="left:224px;top:100px;" width="16" height="16" viewBox="0 0 16 16"><g transform="translate(8 8) scale(0.88) translate(-8 -8)"><path d="M2 9l3 4 5-10h4" fill="none" stroke="#999" stroke-width="1.1"/></g></svg>
<svg class="a" style="left:242px;top:100px;" width="16" height="16" viewBox="0 0 16 16"><g transform="translate(8 8) scale(0.88) translate(-8 -8)"><path d="M14 8H9M9 8L5 4M9 8L5 12M9 8H3" stroke="#7fb3e0" stroke-width="1.2" fill="none"/><circle cx="9" cy="8" r="1.5" fill="#7fb3e0"/></g></svg>
<svg class="a" style="left:260px;top:100px;" width="16" height="16" viewBox="0 0 16 16"><g transform="translate(8 8) scale(0.88) translate(-8 -8)"><path d="M3 3l10 5-10 5z" fill="none" stroke="#555" stroke-width="1.2"/><path d="M1 8h14" stroke="#555"/></g></svg>
<div class="a" style="left:281px;top:100px;width:1px;height:15px;background:#c6c6c6"></div>
<svg class="a" style="left:283px;top:100px;" width="16" height="16" viewBox="0 0 16 16"><g transform="translate(8 8) scale(0.88) translate(-8 -8)"><circle cx="10" cy="6" r="3.5" fill="none" stroke="#555" stroke-width="1.2"/><path d="M7.5 8.5L3 13" stroke="#555" stroke-width="1.3"/></g></svg>
<svg class="a" style="left:301px;top:100px;" width="16" height="16" viewBox="0 0 16 16"><g transform="translate(8 8) scale(0.88) translate(-8 -8)"><path d="M5 4c2-3 8-3 10-1l-2 2H9z" fill="#c9935a"/><circle cx="8" cy="10" r="3.5" fill="none" stroke="#555" stroke-width="1.2"/><path d="M6 12l-3 3" stroke="#555" stroke-width="1.3"/></g></svg>
<div class="a" style="left:320px;top:100px;width:1px;height:15px;background:#c6c6c6"></div>
<svg class="a" style="left:323px;top:100px;" width="16" height="16" viewBox="0 0 16 16"><g transform="translate(8 8) scale(0.88) translate(-8 -8)"><rect x="2.5" y="3.5" width="10" height="10" fill="#fff" stroke="#555"/><rect x="2.5" y="3.5" width="10" height="2.5" fill="#2f6fa8"/><path d="M2.5 8.5h10M2.5 11h10M6 6v7.5M9 6v7.5" stroke="#888" stroke-width=".6"/></g></svg>
<svg class="a" style="left:341px;top:100px;" width="16" height="16" viewBox="0 0 16 16"><g transform="translate(8 8) scale(0.88) translate(-8 -8)"><path d="M4 4c2-3 8-3 11-1l-2 2H8z" fill="#c9935a"/><rect x="2.5" y="6.5" width="10" height="8" fill="#fff" stroke="#555"/><path d="M2.5 9h10M2.5 11.5h10M6 6.5v8M9 6.5v8" stroke="#888" stroke-width=".6"/></g></svg>
<svg class="a" style="left:358px;top:100px;" width="16" height="16" viewBox="0 0 16 16"><g transform="translate(8 8) scale(0.88) translate(-8 -8)"><rect x="2.5" y="3.5" width="10" height="10" fill="#fff" stroke="#555"/><rect x="2.5" y="3.5" width="10" height="2.5" fill="#888"/><path d="M2.5 8.5h10M2.5 11h10M6 6v7.5M9 6v7.5" stroke="#888" stroke-width=".6"/><path d="M13 1v5M10.5 3.5h5" stroke="#43a047"/></g></svg>
<div class="a" style="left:379px;top:100px;width:1px;height:15px;background:#c6c6c6"></div>
<svg class="a" style="left:382px;top:100px;" width="16" height="16" viewBox="0 0 16 16"><g transform="translate(8 8) scale(0.88) translate(-8 -8)"><rect x="2.5" y="3.5" width="10" height="10" fill="#fff" stroke="#555"/><rect x="2.5" y="3.5" width="10" height="2.5" fill="#2f6fa8"/><path d="M2.5 8.5h10M2.5 11h10M6 6v7.5M9 6v7.5" stroke="#888" stroke-width=".6"/><path d="M12 9l3.5 6h-7z" fill="#d32f2f"/></g></svg>
<svg class="a" style="left:399px;top:100px;" width="16" height="16" viewBox="0 0 16 16"><g transform="translate(8 8) scale(0.88) translate(-8 -8)"><rect x="2.5" y="3.5" width="10" height="10" fill="#fff" stroke="#555"/><rect x="2.5" y="3.5" width="10" height="2.5" fill="#2f6fa8"/><path d="M2.5 8.5h10M2.5 11h10M6 6v7.5M9 6v7.5" stroke="#888" stroke-width=".6"/><path d="M12 9l3.5 6h-7z" fill="#d32f2f"/><rect x="1" y="1" width="8" height="4" fill="#2f6fa8"/></g></svg>
<svg class="a" style="left:417px;top:100px;" width="16" height="16" viewBox="0 0 16 16"><g transform="translate(8 8) scale(0.88) translate(-8 -8)"><path d="M8 2l7 12H1z" fill="#d32f2f"/><rect x="7.3" y="6" width="1.4" height="4.5" fill="#fff"/><rect x="7.3" y="11.5" width="1.4" height="1.4" fill="#fff"/></g></svg>
<svg class="a" style="left:435px;top:100px;" width="16" height="16" viewBox="0 0 16 16"><g transform="translate(8 8) scale(0.88) translate(-8 -8)"><rect x="2.5" y="3.5" width="10" height="10" fill="#fff" stroke="#555"/><rect x="2.5" y="3.5" width="10" height="2.5" fill="#c62828"/><path d="M2.5 8.5h10M2.5 11h10M6 6v7.5M9 6v7.5" stroke="#888" stroke-width=".6"/><rect x="13" y="6" width="2" height="8" fill="#f5b800"/></g></svg>
<div class="a" style="left:454px;top:100px;width:1px;height:15px;background:#c6c6c6"></div>
<svg class="a" style="left:457px;top:100px;" width="16" height="16" viewBox="0 0 16 16"><g transform="translate(8 8) scale(0.88) translate(-8 -8)"><rect x="4" y="3" width="6" height="6" rx="3" fill="#555"/><rect x="5" y="9" width="4" height="4" fill="#666"/><circle cx="11.5" cy="12" r="2.5" fill="#222"/><path d="M10.3 12h2.4" stroke="#fff"/></g></svg>
<div class="a" style="left:476px;top:100px;width:1px;height:15px;background:#c6c6c6"></div>
<svg class="a" style="left:479px;top:100px;" width="16" height="16" viewBox="0 0 16 16"><g transform="translate(8 8) scale(0.88) translate(-8 -8)"><rect x="2.5" y="2.5" width="11" height="11" fill="#e9f2fb" stroke="#b5cde3"/><circle cx="8" cy="8" r="3.5" fill="none" stroke="#6aa3d8"/><path d="M8 6.5v3.5" stroke="#6aa3d8"/></g></svg>
<svg class="a" style="left:497px;top:100px;" width="16" height="16" viewBox="0 0 16 16"><g transform="translate(8 8) scale(0.88) translate(-8 -8)"><path d="M2 5c2-3 8-4 12-2l-2 2H7z" fill="#c9935a"/><rect x="2.5" y="5.5" width="11" height="9" fill="#e9f2fb" stroke="#b5cde3"/><circle cx="8" cy="10" r="3" fill="none" stroke="#6aa3d8"/></g></svg>
<div class="a" style="left:22px;top:119px;width:651px;height:19px;background:#efeff1"></div>
<div class="a" style="left:22px;top:134px;width:651px;height:1px;background:#d0d0d0"></div>
<div class="a" style="left:22px;top:135px;width:651px;height:3px;background:#fff"></div>
<div class="a" style="left:22px;top:119px;width:131px;height:19px;background:#fff"></div>
<div class="t" style="left:53px;top:124.32px;font-size:7.1px;color:#1a2338">NONAME_0.dwg</div>
<svg class="a" style="left:136px;top:123px;" width="9" height="9" viewBox="0 0 9 9"><path d="M.5 .5l8 8M8.5 .5l-8 8" stroke="#444" stroke-width=".9"/></svg>
<div class="a" style="left:153px;top:119px;width:18px;height:16px;background:#e4e4e4;border-left:1px solid #c4c4c4;border-bottom:1px solid #c4c4c4;border-right:1px solid #d4d4d4"></div>
<svg class="a" style="left:156px;top:121px;" width="12" height="12" viewBox="0 0 12 12"><path d="M6 1.5v9M1.5 6h9" stroke="#333" stroke-width="1.2"/></svg>
<div class="a" style="left:1px;top:118px;width:20px;height:402px;background:#f0f0f0"></div>
<div class="a" style="left:21px;top:118px;width:1px;height:402px;background:#dadada"></div>
<div class="a" style="left:4px;top:122px;width:14px;height:1px;background:repeating-linear-gradient(90deg,#b0b0b0 0 1px,transparent 1px 3px)"></div>
<svg class="a" style="left:2px;top:126px;" width="16" height="16" viewBox="0 0 16 16"><g transform="translate(8 8) scale(0.75) translate(-8 -8)"><path d="M4 12l8-8" stroke="#444"/><circle cx="4" cy="12" r="1.8" fill="#fff" stroke="#c8961e" stroke-width="1.2"/><circle cx="12" cy="4" r="1.8" fill="#fff" stroke="#c8961e" stroke-width="1.2"/></g></svg>
<svg class="a" style="left:2px;top:143px;" width="16" height="16" viewBox="0 0 16 16"><g transform="translate(8 8) scale(0.75) translate(-8 -8)"><path d="M1 15L15 1" stroke="#1e88e5" stroke-width="1.1"/><circle cx="8" cy="8" r="1.8" fill="#fff" stroke="#c8961e" stroke-width="1.2"/></g></svg>
<svg class="a" style="left:2px;top:161px;" width="16" height="16" viewBox="0 0 16 16"><g transform="translate(8 8) scale(0.75) translate(-8 -8)"><path d="M5 3h6l3 5-3 5H5L2 8z" fill="none" stroke="#333" stroke-width="1.1"/></g></svg>
<svg class="a" style="left:2px;top:178px;" width="16" height="16" viewBox="0 0 16 16"><g transform="translate(8 8) scale(0.75) translate(-8 -8)"><rect x="3" y="5" width="10" height="8" fill="none" stroke="#333"/><circle cx="3.5" cy="4.5" r="1.5" fill="#fff" stroke="#c8961e"/><circle cx="12.5" cy="12.5" r="1.5" fill="#fff" stroke="#c8961e"/></g></svg>
<svg class="a" style="left:2px;top:195px;" width="16" height="16" viewBox="0 0 16 16"><g transform="translate(8 8) scale(0.75) translate(-8 -8)"><path d="M3 10a5 5 0 0 1 10 0" fill="none" stroke="#333"/><circle cx="3" cy="10" r="1.6" fill="#fff" stroke="#c8961e"/><circle cx="13" cy="10" r="1.6" fill="#fff" stroke="#c8961e"/><circle cx="8" cy="13" r="1.6" fill="#fff" stroke="#c8961e"/></g></svg>
<svg class="a" style="left:2px;top:212px;" width="16" height="16" viewBox="0 0 16 16"><g transform="translate(8 8) scale(0.75) translate(-8 -8)"><path d="M4 4l6 4 2 5" fill="none" stroke="#333"/><circle cx="4" cy="4" r="1.6" fill="#fff" stroke="#c8961e"/><circle cx="10" cy="8" r="1.6" fill="#fff" stroke="#c8961e"/><circle cx="12" cy="13" r="1.6" fill="#fff" stroke="#c8961e"/></g></svg>
<svg class="a" style="left:2px;top:230px;" width="16" height="16" viewBox="0 0 16 16"><g transform="translate(8 8) scale(0.75) translate(-8 -8)"><circle cx="8" cy="9" r="5.5" fill="none" stroke="#333"/><circle cx="8" cy="9" r="1.5" fill="#fff" stroke="#c8961e"/><circle cx="12" cy="4" r="1.5" fill="#fff" stroke="#c8961e"/></g></svg>
<svg class="a" style="left:2px;top:247px;" width="16" height="16" viewBox="0 0 16 16"><g transform="translate(8 8) scale(0.75) translate(-8 -8)"><ellipse cx="8" cy="9" rx="6" ry="4" transform="rotate(-30 8 9)" fill="none" stroke="#333"/><circle cx="11" cy="5" r="1.5" fill="#fff" stroke="#c8961e"/></g></svg>
<svg class="a" style="left:2px;top:264px;" width="16" height="16" viewBox="0 0 16 16"><g transform="translate(8 8) scale(0.75) translate(-8 -8)"><path d="M3 10a5 5 0 0 1 10 0" fill="none" stroke="#333"/><circle cx="3" cy="10" r="1.6" fill="#fff" stroke="#c8961e"/><circle cx="13" cy="10" r="1.6" fill="#fff" stroke="#c8961e"/><circle cx="8" cy="13" r="1.6" fill="#fff" stroke="#c8961e"/></g></svg>
<svg class="a" style="left:2px;top:282px;" width="16" height="16" viewBox="0 0 16 16"><g transform="translate(8 8) scale(0.75) translate(-8 -8)"><circle cx="4" cy="4" r="1.6" fill="#fff" stroke="#c8961e"/><circle cx="12" cy="4" r="1.6" fill="#fff" stroke="#c8961e"/><circle cx="8" cy="8" r="1.6" fill="#fff" stroke="#c8961e"/><circle cx="4" cy="12" r="1.6" fill="#fff" stroke="#c8961e"/><circle cx="12" cy="12" r="1.6" fill="#fff" stroke="#c8961e"/><path d="M4 4l8 8M12 4l-8 8" stroke="#555" stroke-width=".6"/></g></svg>
<svg class="a" style="left:2px;top:299px;" width="16" height="16" viewBox="0 0 16 16"><g transform="translate(8 8) scale(0.75) translate(-8 -8)"><path d="M3 12c2-6 6 2 10-7" fill="none" stroke="#333"/><circle cx="3" cy="12" r="1.6" fill="#fff" stroke="#c8961e"/><circle cx="13" cy="5" r="1.6" fill="#fff" stroke="#c8961e"/></g></svg>
<svg class="a" style="left:2px;top:316px;" width="16" height="16" viewBox="0 0 16 16"><g transform="translate(8 8) scale(0.75) translate(-8 -8)"><path d="M3 13h3M6 10h3M9 7h3M11 4h3" stroke="#222" stroke-width="1.8"/></g></svg>
<svg class="a" style="left:2px;top:334px;" width="16" height="16" viewBox="0 0 16 16"><g transform="translate(8 8) scale(0.75) translate(-8 -8)"><path d="M3 3v10M3 6h10M3 10h10" stroke="#333"/><path d="M5 8h9" stroke="#1e88e5" stroke-dasharray="2 1"/></g></svg>
<svg class="a" style="left:2px;top:351px;" width="16" height="16" viewBox="0 0 16 16"><g transform="translate(8 8) scale(0.75) translate(-8 -8)"><rect x="2.5" y="2.5" width="11" height="11" fill="#e3f2fd" stroke="#1565c0"/><path d="M3 9l6-6M3 13L13 3M7 13l6-6" stroke="#42a5f5"/></g></svg>
<svg class="a" style="left:2px;top:368px;" width="16" height="16" viewBox="0 0 16 16"><g transform="translate(8 8) scale(0.75) translate(-8 -8)"><rect x="2.5" y="2.5" width="10" height="10" fill="#fff" stroke="#7aaad8"/><text x="4" y="10" font-size="7" font-family="Liberation Sans" fill="#1565c0">A</text><path d="M12 11v4M10 13h4" stroke="#43a047" stroke-width="1.2"/><path d="M11 2l2 2" stroke="#1e88e5"/></g></svg>
<svg class="a" style="left:2px;top:386px;" width="16" height="16" viewBox="0 0 16 16"><g transform="translate(8 8) scale(0.75) translate(-8 -8)"><rect x="2" y="3" width="10" height="9" rx="1.5" fill="#f5b800" stroke="#8a6d00"/><rect x="5" y="5" width="9" height="9" rx="1.5" fill="none" stroke="#8a6d00"/></g></svg>
<svg class="a" style="left:2px;top:403px;" width="16" height="16" viewBox="0 0 16 16"><g transform="translate(8 8) scale(0.75) translate(-8 -8)"><rect x="2.5" y="2.5" width="11" height="11" fill="#fff" stroke="#333"/><text x="4" y="11" font-size="7" font-family="Liberation Sans" fill="#333">A</text></g></svg>
<svg class="a" style="left:2px;top:420px;" width="16" height="16" viewBox="0 0 16 16"><g transform="translate(8 8) scale(0.75) translate(-8 -8)"><rect x="2.5" y="4.5" width="11" height="8" fill="#fff" stroke="#333"/><rect x="2.5" y="4.5" width="4" height="8" fill="#ddd" stroke="#333"/></g></svg>
<svg class="a" style="left:2px;top:438px;" width="16" height="16" viewBox="0 0 16 16"><g transform="translate(8 8) scale(0.75) translate(-8 -8)"><text x="5" y="7" font-size="6" font-family="Liberation Sans" fill="#1565c0">A</text><path d="M8 8L3 13M8 8l5 5" stroke="#5b9bd5" fill="none"/><circle cx="3" cy="13" r="1.5" fill="#fff" stroke="#5b9bd5"/><circle cx="13" cy="13" r="1.5" fill="#fff" stroke="#5b9bd5"/></g></svg>
<svg class="a" style="left:2px;top:454px;" width="16" height="16" viewBox="0 0 16 16"><g transform="translate(8 8) scale(0.75) translate(-8 -8)"><rect x="2.5" y="2.5" width="10" height="9" fill="none" stroke="#333" stroke-dasharray="1.5 1"/><circle cx="12" cy="12" r="2.6" fill="#333"/><circle cx="12" cy="12" r="1" fill="#fff"/></g></svg>
<svg class="a" style="left:2px;top:472px;" width="16" height="16" viewBox="0 0 16 16"><g transform="translate(8 8) scale(0.75) translate(-8 -8)"><rect x="2.5" y="3.5" width="11" height="10" rx="2" fill="none" stroke="#333" stroke-dasharray="1.5 1"/></g></svg>
<svg class="a" style="left:2px;top:490px;" width="16" height="16" viewBox="0 0 16 16"><g transform="translate(8 8) scale(0.75) translate(-8 -8)"><path d="M3 8c0-3 3-4 5-3 1-2 5-1 5 2 2 1 1 5-2 5-1 2-5 2-6 0-3 0-3-3-2-4z" fill="none" stroke="#333"/></g></svg>
<svg class="a" style="left:2px;top:507px;" width="16" height="16" viewBox="0 0 16 16"><g transform="translate(8 8) scale(0.75) translate(-8 -8)"><path d="M4 3l5 1 4-1-1 5 2 3-4 1-1 3-3-3-4-1 2-3z" fill="none" stroke="#333"/></g></svg>
<div class="a" style="left:22px;top:138px;width:651px;height:357px;background:#000"></div>
<div class="a" style="left:303px;top:239px;width:1px;height:49px;background:#3fa83f"></div>
<div class="a" style="left:279px;top:263px;width:49px;height:1px;background:#a01c1c"></div>
<div class="a" style="left:151px;top:420px;width:1px;height:42px;background:#e8e8e8"></div>
<div class="a" style="left:152px;top:462px;width:41px;height:1px;background:#e8e8e8"></div>
<svg class="a" style="left:148px;top:459px;" width="8" height="8" viewBox="0 0 8 8"><rect x="0.5" y="0.5" width="7" height="7" fill="#000" stroke="#e0e0e0"/><path d="M4 0.5v7M0.5 4h7" stroke="#e0e0e0"/></svg>
<svg class="a" style="left:147px;top:419px;" width="9" height="8" viewBox="0 0 9 8"><path d="M1 6.5l3.5-5 3.5 5" fill="none" stroke="#e0e0e0"/></svg>
<svg class="a" style="left:187px;top:458px;" width="9" height="9" viewBox="0 0 9 9"><path d="M1 1l6.5 3.5L1 8" fill="none" stroke="#e0e0e0"/></svg>
<svg class="a" style="left:147px;top:409px;" width="9" height="10" viewBox="0 0 9 10"><path d="M1 1l3.5 4L8 1M4.5 5v4.5" fill="none" stroke="#e0e0e0"/></svg>
<svg class="a" style="left:195px;top:457px;" width="10" height="11" viewBox="0 0 10 11"><path d="M1 1l8 9M9 1L1 10" fill="none" stroke="#e0e0e0"/></svg>
<div class="a" style="left:22px;top:495px;width:651px;height:1px;background:#fff"></div>
<div class="a" style="left:22px;top:496px;width:651px;height:9px;background:#f0f0f0"></div>
<div class="a" style="left:22px;top:505px;width:651px;height:1px;background:#fafafa"></div>
<svg class="a" style="left:20px;top:494px;" width="150" height="12" viewBox="0 0 150 12"><path d="M82 0.5C84 2 85 8 86 9.5Q86.6 10.5 88 10.5H119Q120.4 10.5 121 9.5L125 0.5" fill="#cbcbcb" stroke="#3a3a3a" stroke-width="1"/><path d="M39 0.5C41 2 42 8 43 9.5Q43.6 10.5 45 10.5H76Q77.4 10.5 78 9.5L82 0.5" fill="#cbcbcb" stroke="#3a3a3a" stroke-width="1"/><path d="M1.5 0.5C3.5 2 4.5 8 5.5 9.5Q6.1 10.5 7.5 10.5H33Q34.4 10.5 35 9.5L39 0.5" fill="#fff" stroke="#3a3a3a" stroke-width="1"/></svg>
<div class="t" style="left:41px;top:496.18px;font-size:7.8px;transform:translateX(-50%);font-weight:bold;color:#111">Model</div>
<div class="t" style="left:81px;top:496.32px;font-size:7.5px;transform:translateX(-50%);color:#222">Sheet1</div>
<div class="t" style="left:123.5px;top:496.32px;font-size:7.5px;transform:translateX(-50%);color:#222">Sheet2</div>
<div class="a" style="left:150px;top:496px;width:14px;height:7px;background:#e8e8e8;border:1px solid #bdbdbd"></div>
<svg class="a" style="left:152px;top:495px;" width="10" height="8" viewBox="0 0 10 8"><path d="M5 1.5v5M2.5 4h5" stroke="#555" stroke-width=".9"/></svg>
<div class="a" style="left:21px;top:506px;width:918px;height:1px;background:#707070"></div>
<div class="a" style="left:21px;top:507px;width:918px;height:1px;background:#9a9a9a"></div>
<div class="a" style="left:22px;top:508px;width:917px;height:15px;background:#c3c3c3"></div>
<div class="a" style="left:22px;top:523px;width:917px;height:1px;background:#a8a8a8"></div>
<div class="a" style="left:21px;top:506px;width:1px;height:64px;background:#8a8a8a"></div>
<div class="a" style="left:938px;top:506px;width:1px;height:64px;background:#8a8a8a"></div>
<div class="t" style="left:24px;top:512.23px;font-size:7.7px;font-weight:bold;color:#1a1a1a">Command Window</div>
<svg class="a" style="left:912px;top:511px;" width="8" height="8" viewBox="0 0 8 8"><rect x="2.5" y="1" width="5" height="4" fill="none" stroke="#111"/><rect x="0.5" y="3" width="5" height="4.5" fill="#c3c3c3" stroke="#111"/><rect x="2.5" y="1" width="5" height="1.3" fill="#111"/></svg>
<svg class="a" style="left:927px;top:512px;" width="7" height="7" viewBox="0 0 7 7"><path d="M1 1l5 5M6 1l-5 5" stroke="#111" stroke-width="1.3"/></svg>
<div class="a" style="left:22px;top:524px;width:917px;height:35px;background:#fff"></div>
<div class="t" style="left:25px;top:525.79px;font-size:8.6px;font-weight:bold;color:#1a1a1a">Specify distance option» <span style="font-weight:normal">«Cancel»</span></div>
<div class="t" style="left:25px;top:536.93px;font-size:8.3px;color:#333"><span style="color:#aaa">:</span> «Cancel»</div>
<div class="t" style="left:25px;top:546.06px;font-size:6px;color:#999">:</div>
<div class="t" style="left:25px;top:552.06px;font-size:6px;color:#999">:</div>
<div class="a" style="left:927px;top:526px;width:11px;height:32px;background:#f0f0f0"></div>
<svg class="a" style="left:927px;top:527px;" width="11" height="8" viewBox="0 0 11 8"><path d="M2 6l3.5-4 3.5 4z" fill="#111"/></svg>
<div class="a" style="left:928px;top:542px;width:9px;height:5px;background:#c8c8c8"></div>
<svg class="a" style="left:927px;top:550px;" width="11" height="8" viewBox="0 0 11 8"><path d="M2 2l3.5 4 3.5-4z" fill="#111"/></svg>
<div class="a" style="left:22px;top:559px;width:917px;height:1px;background:#d0d0d0"></div>
<div class="a" style="left:22px;top:560px;width:917px;height:10px;background:#fff"></div>
<div class="t" style="left:25px;top:560.84px;font-size:8.5px;color:#222"><span style="color:#aaa">:</span> _LOADAPPLICATION</div>
<div class="t" style="left:3px;top:579.08px;font-size:7.6px;color:#1a1a1a">DraftSight 2019 x64</div>
<div class="a" style="left:339px;top:573px;width:17px;height:17px;background:#e6e6e6;border:1px solid #cfcfcf"></div>
<div class="a" style="left:361px;top:573px;width:17px;height:17px;background:#e6e6e6;border:1px solid #cfcfcf"></div>
<div class="a" style="left:383px;top:573px;width:17px;height:17px;background:#e6e6e6;border:1px solid #cfcfcf"></div>
<div class="a" style="left:405px;top:573px;width:17px;height:17px;background:#e6e6e6;border:1px solid #cfcfcf"></div>
<div class="a" style="left:429px;top:573px;width:17px;height:17px;background:#e6e6e6;border:1px solid #cfcfcf"></div>
<div class="a" style="left:451px;top:573px;width:17px;height:17px;background:#cce4f7;border:1px solid #7eb4ea"></div>
<div class="a" style="left:473px;top:573px;width:17px;height:17px;background:#cce4f7;border:1px solid #7eb4ea"></div>
<div class="a" style="left:495px;top:573px;width:17px;height:17px;background:#cce4f7;border:1px solid #7eb4ea"></div>
<div class="a" style="left:517px;top:573px;width:17px;height:17px;background:#cce4f7;border:1px solid #7eb4ea"></div>
<svg class="a" style="left:339px;top:573px;" width="17" height="17" viewBox="0 0 17 17"><rect x="4" y="3" width="6" height="3" fill="#555"/><rect x="6" y="6" width="2" height="5" fill="#555"/><rect x="8" y="9" width="5" height="4" fill="#d4a017"/></svg>
<svg class="a" style="left:361px;top:573px;" width="17" height="17" viewBox="0 0 17 17"><path d="M2 5h12M2 9h12M6 2v12M10 2v12" stroke="#9a9a9a" stroke-width=".6"/><path d="M5 4l7 6h-3l2 4-2 1-2-4-2 2z" fill="#fff" stroke="#111"/><rect x="3" y="3" width="3" height="3" fill="#d32f2f"/></svg>
<svg class="a" style="left:383px;top:573px;" width="17" height="17" viewBox="0 0 17 17"><path d="M3 4.5h11M3 7.5h11M3 10.5h11M3 13.5h11M4.5 3v11M7.5 3v11M10.5 3v11M13.5 3v11" stroke="#111" stroke-width="1"/></svg>
<svg class="a" style="left:405px;top:573px;" width="17" height="17" viewBox="0 0 17 17"><path d="M4 3l8 2v7l-8 2z" fill="none" stroke="#444"/><path d="M1 8h3M12 8h3" stroke="#444"/></svg>
<svg class="a" style="left:429px;top:573px;" width="17" height="17" viewBox="0 0 17 17"><circle cx="7" cy="9" r="4" fill="none" stroke="#555"/><path d="M4 3l9 11M12 5l3-2" stroke="#5b9bd5"/></svg>
<svg class="a" style="left:451px;top:573px;" width="17" height="17" viewBox="0 0 17 17"><text x="1" y="9" font-size="8" font-family="Liberation Sans" fill="#1565c0">E</text><path d="M6 4l7 6h-3l2 4-2 1-2-4-2 2z" fill="#fff" stroke="#111"/><rect x="12" y="12" width="3" height="3" fill="#d32f2f"/></svg>
<svg class="a" style="left:473px;top:573px;" width="17" height="17" viewBox="0 0 17 17"><text x="2" y="8" font-size="6" font-family="Liberation Sans" fill="#1565c0">E</text><path d="M7 6.5h5M6 8.5h7M5 10.5h9M4 12.5h11" stroke="#111" stroke-width=".8"/></svg>
<svg class="a" style="left:495px;top:573px;" width="17" height="17" viewBox="0 0 17 17"><rect x="3" y="3" width="10" height="10" fill="none" stroke="#333" stroke-dasharray="1 1"/><path d="M5 5h4l3 3v4H5z" fill="none" stroke="#333"/></svg>
<svg class="a" style="left:517px;top:573px;" width="17" height="17" viewBox="0 0 17 17"><rect x="7" y="6" width="7" height="8" fill="none" stroke="#333"/><rect x="8" y="2" width="4" height="3" fill="#1e88e5"/><rect x="2" y="11" width="2" height="2" fill="#1e88e5"/></svg>
<div class="a" style="left:540px;top:575px;width:63px;height:13px;background:#e1e1e1;border:1px solid #c3c3c3"></div>
<div class="t" style="left:543px;top:577.63px;font-size:7.9px;color:#222">Annotation</div>
<svg class="a" style="left:589px;top:577px;" width="10" height="9" viewBox="0 0 10 9"><path d="M1 2h8l-4 5z" fill="#111"/></svg>
<div class="t" style="left:608px;top:577.42px;font-size:7.3px;color:#333">(1:1)</div>
<div class="t" style="left:628px;top:577.97px;font-size:7.2px;color:#222">(3.1161,9.7175,0.0000)</div>
<div class="a" style="left:673px;top:119px;width:2px;height:386px;background:#fafafa"></div>
<div class="a" style="left:675px;top:119px;width:1px;height:386px;background:#8c8c8c"></div>
<div class="a" style="left:676px;top:119px;width:1px;height:386px;background:#f0f0f0"></div>
<div class="a" style="left:677px;top:120px;width:1px;height:384px;background:#d2d2d2"></div>
<div class="a" style="left:677px;top:120px;width:231px;height:1px;background:#d8d8d8"></div>
<div class="a" style="left:677px;top:503px;width:231px;height:1px;background:#d2d2d2"></div>
<div class="a" style="left:684px;top:126px;width:218px;height:372px;background:#f0f0f0;border:1px solid #c8c8c8"></div>
<div class="a" style="left:890px;top:127px;width:11px;height:11px;background:#f0f0f0;border-top:1px solid #fff;border-left:1px solid #fff;border-right:2px solid #8d8d8d;border-bottom:1px solid #999"></div>
<svg class="a" style="left:892px;top:130px;" width="7" height="5" viewBox="0 0 7 5"><path d="M0.5 4l3-3.5 3 3.5z" fill="#111"/></svg>
<div class="a" style="left:890px;top:138px;width:11px;height:216px;background:#f0f0f0;border-top:1px solid #fff;border-left:1px solid #fff;border-bottom:1px solid #777;border-right:2px solid #8d8d8d"></div>
<div class="a" style="left:890px;top:486px;width:11px;height:11px;background:#f0f0f0;border-top:1px solid #fff;border-left:1px solid #fff;border-right:2px solid #8d8d8d;border-bottom:1px solid #777"></div>
<svg class="a" style="left:892px;top:489px;" width="7" height="5" viewBox="0 0 7 5"><path d="M0.5 1l3 3.5 3-3.5z" fill="#111"/></svg>
<div class="a" style="left:692px;top:131px;width:191px;height:15px;background:#dfe3fb;border:1px solid #9aa0c8"></div>
<div class="t" style="left:694px;top:135.88px;font-size:7.8px;font-weight:bold;color:#141414">Comments</div>
<svg class="a" style="left:870px;top:135px;" width="10" height="8" viewBox="0 0 10 8"><path d="M1 6.5l4-5 4 5z" fill="#111"/></svg>
<div class="a" style="left:692px;top:146px;width:191px;height:26px;background:#efefef;border:1px solid #e3e3e3;border-top:none"></div>
<div class="a" style="left:705px;top:148px;width:171px;height:21px;background:#fff;border:1px solid #adadad"></div>
<svg class="a" style="left:812px;top:160px;" width="6" height="13" viewBox="0 0 6 13"><path d="M1 1h4M3 1v11M1 12h4" stroke="#555" stroke-width=".8"/></svg>
<div class="a" style="left:692px;top:176px;width:191px;height:15px;background:#dfe3fb;border:1px solid #9aa0c8"></div>
<div class="t" style="left:694px;top:180.88px;font-size:7.8px;font-weight:bold;color:#141414">Path and drill cycle</div>
<svg class="a" style="left:870px;top:180px;" width="10" height="8" viewBox="0 0 10 8"><path d="M1 6.5l4-5 4 5z" fill="#111"/></svg>
<div class="a" style="left:692px;top:191px;width:191px;height:38px;background:#efefef;border:1px solid #e3e3e3;border-top:none"></div>
<div class="a" style="left:718px;top:193px;width:158px;height:14px;background:#fff;border:1px solid #c5c5c5"></div>
<div class="t" style="left:721px;top:196.47px;font-size:7.2px;color:#222">2D Toolpath</div>
<div class="a" style="left:865px;top:194px;width:10px;height:12px;background:#e3e3e3;border:1px solid #c5c5c5"></div>
<svg class="a" style="left:865px;top:196px;" width="10" height="8" viewBox="0 0 10 8"><path d="M2 2.5l3 3 3-3" fill="none" stroke="#777"/></svg>
<div class="a" style="left:718px;top:208px;width:19px;height:19px;background:#f3f3f3;border:1px solid #d8d8d8"></div>
<div class="a" style="left:745px;top:208px;width:19px;height:19px;background:#f3f3f3;border:1px solid #d8d8d8"></div>
<div class="a" style="left:771px;top:208px;width:19px;height:19px;background:#f3f3f3;border:1px solid #d8d8d8"></div>
<div class="a" style="left:798px;top:208px;width:19px;height:19px;background:#f3f3f3;border:1px solid #d8d8d8"></div>
<div class="a" style="left:825px;top:208px;width:53px;height:19px;background:#f3f3f3;border:1px solid #d8d8d8"></div>
<svg class="a" style="left:719px;top:209px;" width="17" height="17" viewBox="0 0 17 17"><circle cx="10" cy="7.5" r="3" fill="#2a6fb0"/><circle cx="10" cy="7.5" r="1.1" fill="#f3f3f3"/><path d="M10 3.5v8M6 7.5h8M7.2 4.7l5.6 5.6M12.8 4.7l-5.6 5.6" stroke="#2a6fb0" stroke-width="1.3"/><rect x="4" y="11" width="3" height="3" fill="#b0c4d8"/></svg>
<svg class="a" style="left:746px;top:209px;" width="17" height="17" viewBox="0 0 17 17"><g transform="translate(3.5,3) scale(.65)"><path d="M1 6h5l1 1h7v7H1z" fill="#f5b800" stroke="#8a6d00" stroke-width=".8"/><path d="M1 9h13v5H1z" fill="#ffcc33"/><path d="M9 1l3 3h-2v3H8V4H6z" fill="#43a047"/></g></svg>
<svg class="a" style="left:772px;top:209px;" width="17" height="17" viewBox="0 0 17 17"><rect x="5.5" y="4.5" width="7" height="8" fill="#fff" stroke="#1e88e5" stroke-width="1.1"/><rect x="5.5" y="4.5" width="7" height="2" fill="#1e88e5"/></svg>
<div class="t" style="left:807.5px;top:214.14px;font-size:8.5px;transform:translateX(-50%);font-weight:bold;color:#111">?</div>
<div class="t" style="left:851.5px;top:214.97px;font-size:7.2px;transform:translateX(-50%);color:#222">Append</div>
<div class="a" style="left:692px;top:233px;width:191px;height:15px;background:#dfe3fb;border:1px solid #9aa0c8"></div>
<div class="t" style="left:694px;top:237.88px;font-size:7.8px;font-weight:bold;color:#141414">Preamble</div>
<svg class="a" style="left:870px;top:237px;" width="10" height="8" viewBox="0 0 10 8"><path d="M1 6.5l4-5 4 5z" fill="#111"/></svg>
<div class="a" style="left:692px;top:248px;width:191px;height:51px;background:#efefef;border:1px solid #e3e3e3;border-top:none"></div>
<div class="a" style="left:718px;top:250px;width:158px;height:31px;background:#fff;border:1px solid #a9a9a9"></div>
<div class="t" style="left:721px;top:254.32px;font-size:7.1px;color:#222">M3&nbsp;&nbsp;&nbsp;&nbsp;; Start spindle clockwise (looking from</div>
<div class="t" style="left:721px;top:262.92px;font-size:7.1px;color:#222">above down)</div>
<div class="t" style="left:721px;top:271.52px;font-size:7.1px;color:#222">S6000&nbsp; ; Spindle RPM</div>
<div class="a" style="left:864px;top:251px;width:11px;height:29px;background:#f0f0f0"></div>
<svg class="a" style="left:864px;top:252px;" width="11" height="8" viewBox="0 0 11 8"><path d="M2 6l3.5-4 3.5 4z" fill="#111"/></svg>
<div class="a" style="left:864px;top:262px;width:11px;height:6px;background:#f0f0f0;border-top:1px solid #fff;border-bottom:1px solid #999"></div>
<svg class="a" style="left:864px;top:272px;" width="11" height="8" viewBox="0 0 11 8"><path d="M2 2l3.5 4 3.5-4z" fill="#111"/></svg>
<div class="a" style="left:718px;top:286px;width:9px;height:9px;background:#fff;border:1px solid #999"></div>
<div class="t" style="left:732px;top:287.72px;font-size:7.1px;color:#222">Show line numbers</div>
<div class="a" style="left:692px;top:304px;width:191px;height:14px;background:#dfe3fb;border:1px solid #9aa0c8"></div>
<div class="t" style="left:694px;top:308.38px;font-size:7.8px;font-weight:bold;color:#141414">Postscript</div>
<svg class="a" style="left:870px;top:308px;" width="10" height="8" viewBox="0 0 10 8"><path d="M1 6.5l4-5 4 5z" fill="#111"/></svg>
<div class="a" style="left:692px;top:318px;width:191px;height:38px;background:#efefef;border:1px solid #e3e3e3;border-top:none"></div>
<div class="a" style="left:718px;top:321px;width:158px;height:30px;background:#fff;border:1px solid #a9a9a9"></div>
<div class="t" style="left:721px;top:324.12px;font-size:7.1px;color:#222">G0 Z50;</div>
<div class="t" style="left:721px;top:333.32px;font-size:7.1px;color:#222">Safe height G0 X0 Y0;</div>
<div class="t" style="left:721px;top:342.12px;font-size:7.1px;color:#222">M30; Rewind program</div>
<div class="a" style="left:864px;top:322px;width:11px;height:28px;background:#f0f0f0"></div>
<svg class="a" style="left:864px;top:323px;" width="11" height="8" viewBox="0 0 11 8"><path d="M2 6l3.5-4 3.5 4z" fill="#111"/></svg>
<div class="a" style="left:864px;top:332px;width:11px;height:6px;background:#f0f0f0;border-top:1px solid #fff;border-bottom:1px solid #999"></div>
<svg class="a" style="left:864px;top:342px;" width="11" height="8" viewBox="0 0 11 8"><path d="M2 2l3.5 4 3.5-4z" fill="#111"/></svg>
<div class="a" style="left:692px;top:361px;width:191px;height:14px;background:#dfe3fb;border:1px solid #9aa0c8"></div>
<div class="t" style="left:694px;top:365.38px;font-size:7.8px;font-weight:bold;color:#141414">Units</div>
<svg class="a" style="left:870px;top:365px;" width="10" height="8" viewBox="0 0 10 8"><path d="M1 6.5l4-5 4 5z" fill="#111"/></svg>
<div class="a" style="left:692px;top:375px;width:191px;height:30px;background:#efefef;border:1px solid #e3e3e3;border-top:none"></div>
<div class="a" style="left:718px;top:378px;width:8px;height:8px;background:#fff;border:1px solid #999;border-radius:50%"></div>
<div class="t" style="left:729px;top:378.47px;font-size:7.2px;color:#222">mm</div>
<div class="a" style="left:765px;top:378px;width:8px;height:8px;background:#fff;border:1px solid #6a8ab0;border-radius:50%"></div>
<div class="a" style="left:767px;top:380px;width:4px;height:4px;background:#2a72b8;border-radius:50%"></div>
<div class="t" style="left:777px;top:378.47px;font-size:7.2px;color:#222">inch</div>
<div class="a" style="left:718px;top:389px;width:158px;height:13px;background:#fff;border:1px solid #c5c5c5"></div>
<div class="t" style="left:720px;top:391.97px;font-size:7.2px;color:#111">Relative</div>
<div class="a" style="left:865px;top:390px;width:10px;height:11px;background:#e3e3e3;border:1px solid #c5c5c5"></div>
<svg class="a" style="left:865px;top:391px;" width="10" height="8" viewBox="0 0 10 8"><path d="M2 2.5l3 3 3-3" fill="none" stroke="#777"/></svg>
<div class="a" style="left:692px;top:411px;width:191px;height:13px;background:#dfe3fb;border:1px solid #9aa0c8"></div>
<div class="t" style="left:694px;top:414.88px;font-size:7.8px;font-weight:bold;color:#141414">Retraction and feed rate</div>
<svg class="a" style="left:870px;top:415px;" width="10" height="8" viewBox="0 0 10 8"><path d="M1 6.5l4-5 4 5z" fill="#111"/></svg>
<div class="a" style="left:692px;top:424px;width:191px;height:73px;background:#efefef;border:1px solid #e3e3e3;border-top:none"></div>
<div class="a" style="left:721px;top:432px;width:153px;height:12px;background:#fff;border:1px solid #c8c8c8"></div>
<div class="t" style="left:723px;top:435.27px;font-size:7.2px;color:#8a8a8a">Z Safe Height</div>
<div class="a" style="left:721px;top:453.5px;width:153px;height:12px;background:#fff;border:1px solid #c8c8c8"></div>
<div class="t" style="left:723px;top:456.77px;font-size:7.2px;color:#8a8a8a">Z Retraction</div>
<div class="a" style="left:721px;top:475.5px;width:153px;height:12px;background:#fff;border:1px solid #c8c8c8"></div>
<div class="t" style="left:723px;top:478.77px;font-size:7.2px;color:#8a8a8a">FeedRate Z</div>
<svg class="a" style="left:700px;top:428px;" width="18" height="20" viewBox="0 0 18 20"><text x="3" y="9" font-size="5.5" font-weight="bold" font-family="Liberation Sans" fill="#111" transform="rotate(90 5 7)">z</text><path d="M3 14l3-3M3 14h2M3 14v-2" stroke="#111" stroke-width="1"/><path d="M9.5 2.5h4M9.5 17.5h4" stroke="#111"/><path d="M11.5 4v4M11.5 10v5" stroke="#1e88e5" stroke-width="1.1"/><path d="M10 5.5l1.5-2 1.5 2M10 13l1.5 2 1.5-2" fill="none" stroke="#1e88e5" stroke-width=".8"/></svg>
<svg class="a" style="left:700px;top:451px;" width="18" height="18" viewBox="0 0 18 18"><text x="3" y="8" font-size="5.5" font-weight="bold" font-family="Liberation Sans" fill="#111" transform="rotate(90 5 6)">z</text><path d="M3 13l3-3M3 13h2M3 13v-2" stroke="#111" stroke-width="1"/><path d="M11.5 3v4M11.5 9v5" stroke="#1e88e5" stroke-width="1.1"/><path d="M10 4.5l1.5-2 1.5 2M10 12l1.5 2 1.5-2" fill="none" stroke="#1e88e5" stroke-width=".8"/></svg>
<svg class="a" style="left:700px;top:472px;" width="20" height="26" viewBox="0 0 20 26"><rect x="2.5" y="1.5" width="6" height="4" rx="1" fill="#fff" stroke="#444"/><path d="M2.5 5.5h6v11h-6z" fill="#3a9ad6" stroke="#2a4a5a" stroke-width=".9"/><path d="M2.5 9l6-3M2.5 13l6-3M2.5 16.5l6-3" stroke="#1d3f55" stroke-width="1"/><text x="13" y="9" font-size="5.5" font-weight="bold" font-family="Liberation Sans" fill="#111" transform="rotate(90 14 7)">z</text><path d="M12 14l3-2" stroke="#111" stroke-width="1.2"/><rect x="2.5" y="23.5" width="6" height="3" rx="1" fill="none" stroke="#999"/></svg>
<div class="a" style="left:673px;top:505px;width:266px;height:1px;background:#fafafa"></div>
<div class="a" style="left:908px;top:119px;width:17px;height:386px;background:#c3c3c3;border-left:2px solid #a8a8a8;border-right:1px solid #868686"></div>
<svg class="a" style="left:912px;top:122px;" width="8" height="8" viewBox="0 0 8 8"><path d="M1.5 1.5l5 5M6.5 1.5l-5 5" stroke="#111" stroke-width="1.3"/></svg>
<svg class="a" style="left:912px;top:137px;" width="9" height="11" viewBox="0 0 9 11"><rect x="2.5" y="1" width="4" height="5" fill="#333"/><rect x="1" y="5.5" width="7" height="1.3" fill="#333"/><path d="M4.5 6.5v4" stroke="#333" stroke-width="1"/></svg>
<div class="t" style="left:917px;top:456px;font-size:8px;font-weight:bold;color:#1a1a1a;transform:translate(-50%,-50%) rotate(-90deg)">G-code Generator</div>
<div class="a" style="left:925px;top:119px;width:13px;height:386px;background:#f3f3f3"></div>
<div class="a" style="left:925px;top:119px;width:12px;height:74px;background:#fff;border-right:1px solid #dcdcdc"></div>
<div class="a" style="left:925px;top:193px;width:12px;height:50px;background:#efefef;border-bottom:1px solid #dcdcdc;border-right:1px solid #dcdcdc"></div>
<div class="a" style="left:925px;top:243px;width:12px;height:32px;background:#efefef;border-bottom:1px solid #dcdcdc;border-right:1px solid #dcdcdc"></div>
<div class="t" style="left:931px;top:157px;font-size:7.1px;color:#1a1a1a;transform:translate(-50%,-50%) rotate(-90deg)">G-code Generator</div>
<div class="t" style="left:931px;top:218px;font-size:7.1px;color:#1a1a1a;transform:translate(-50%,-50%) rotate(-90deg)">HomeByMe</div>
<div class="t" style="left:931px;top:260.5px;font-size:7.1px;color:#1a1a1a;transform:translate(-50%,-50%) rotate(-90deg)">Home</div>
<div class="a" style="left:938px;top:118px;width:21px;height:451px;background:#f0f0f0;border-left:1px solid #e0e0e0"></div>
<div class="a" style="left:942px;top:122px;width:14px;height:1px;background:repeating-linear-gradient(90deg,#b0b0b0 0 1px,transparent 1px 3px)"></div>
<svg class="a" style="left:941px;top:126px;" width="16" height="16" viewBox="0 0 16 16"><g transform="translate(8 8) scale(0.75) translate(-8 -8)"><path d="M2 11l7-7 4 3-6 6H4z" fill="#f5b800" stroke="#7a5c00" stroke-width=".8"/><path d="M2 13h8" stroke="#333"/></g></svg>
<svg class="a" style="left:941px;top:143px;" width="16" height="16" viewBox="0 0 16 16"><g transform="translate(8 8) scale(0.75) translate(-8 -8)"><circle cx="7" cy="8" r="4" fill="none" stroke="#1e5f9f" stroke-width="1.5"/><path d="M2 4h8" stroke="#333"/><path d="M10 10l4 4M14 10l-4 4" stroke="#d32f2f" stroke-width="1.2"/></g></svg>
<svg class="a" style="left:941px;top:161px;" width="16" height="16" viewBox="0 0 16 16"><g transform="translate(8 8) scale(0.75) translate(-8 -8)"><rect x="2" y="11" width="3" height="3" fill="#f5b800" stroke="#333" stroke-width=".6"/><path d="M5 11l7-7" stroke="#1e88e5" stroke-width="1.2"/><circle cx="12.5" cy="3.5" r="1.5" fill="#fff" stroke="#333"/></g></svg>
<svg class="a" style="left:941px;top:178px;" width="16" height="16" viewBox="0 0 16 16"><g transform="translate(8 8) scale(0.75) translate(-8 -8)"><path d="M7 2l6 11H7z" fill="none" stroke="#555"/><path d="M7 2L2 13h5" fill="none" stroke="#5b9bd5" stroke-dasharray="1.5 1"/></g></svg>
<svg class="a" style="left:941px;top:195px;" width="16" height="16" viewBox="0 0 16 16"><g transform="translate(8 8) scale(0.75) translate(-8 -8)"><path d="M2 13h2M5 10h2M8 7l4-4" stroke="#333"/><circle cx="13" cy="3" r="1.3" fill="#fff" stroke="#333"/><path d="M6 9l4-4" stroke="#1e88e5" stroke-width="1.3"/></g></svg>
<svg class="a" style="left:941px;top:212px;" width="16" height="16" viewBox="0 0 16 16"><g transform="translate(8 8) scale(0.75) translate(-8 -8)"><path d="M2 3h7l4 4v6H2" fill="none" stroke="#333" stroke-width="1.2"/><path d="M2 6h6l2 2v5" fill="none" stroke="#333"/></g></svg>
<svg class="a" style="left:941px;top:230px;" width="16" height="16" viewBox="0 0 16 16"><g transform="translate(8 8) scale(0.75) translate(-8 -8)"><path d="M3 3h2v2H3zM7 3h2v2H7zM11 3h2v2h-2zM3 7h2v2H3zM7 7h2v2H7zM11 7h2v2h-2zM3 11h2v2H3zM7 11h2v2H7zM11 11h2v2h-2z" fill="none" stroke="#333"/></g></svg>
<svg class="a" style="left:941px;top:247px;" width="16" height="16" viewBox="0 0 16 16"><g transform="translate(8 8) scale(0.75) translate(-8 -8)"><path d="M3 6v7h7" fill="none" stroke="#333" stroke-dasharray="1.5 1"/><path d="M4 4a6 6 0 0 1 8 0" fill="none" stroke="#1e88e5" stroke-width="1.2"/><circle cx="12" cy="11" r="2" fill="#fff" stroke="#333"/></g></svg>
<svg class="a" style="left:941px;top:264px;" width="16" height="16" viewBox="0 0 16 16"><g transform="translate(8 8) scale(0.75) translate(-8 -8)"><rect x="2.5" y="2.5" width="11" height="11" fill="none" stroke="#333"/><path d="M3 13l8-8" stroke="#1e88e5"/><rect x="9" y="4" width="3" height="3" fill="#1e88e5"/></g></svg>
<svg class="a" style="left:941px;top:282px;" width="16" height="16" viewBox="0 0 16 16"><g transform="translate(8 8) scale(0.75) translate(-8 -8)"><path d="M2 3v10h8V8H6V3z" fill="none" stroke="#333"/><path d="M10 8h4M12 6v4" stroke="#1e88e5"/></g></svg>
<svg class="a" style="left:941px;top:299px;" width="16" height="16" viewBox="0 0 16 16"><g transform="translate(8 8) scale(0.75) translate(-8 -8)"><path d="M3 5a5 5 0 0 0 2 8" fill="none" stroke="#1e88e5" stroke-width="1.2"/><rect x="9" y="2" width="5" height="4" fill="#fff" stroke="#333"/><path d="M11 8l3 3-3 3-3-3z" fill="#fff" stroke="#333"/></g></svg>
<svg class="a" style="left:941px;top:316px;" width="16" height="16" viewBox="0 0 16 16"><g transform="translate(8 8) scale(0.75) translate(-8 -8)"><path d="M3 4h5a5 5 0 0 1 5 5v4" fill="none" stroke="#333" stroke-width="1.1"/><path d="M10 7a5 5 0 0 1 3 6" fill="none" stroke="#1e88e5"/></g></svg>
<svg class="a" style="left:941px;top:334px;" width="16" height="16" viewBox="0 0 16 16"><g transform="translate(8 8) scale(0.75) translate(-8 -8)"><path d="M3 4h5a5 5 0 0 1 5 5v4" fill="none" stroke="#333" stroke-width="1.1"/><path d="M5 8v4M3 10h4" stroke="#333"/><path d="M10 7a5 5 0 0 1 3 6" fill="none" stroke="#1e88e5"/></g></svg>
<svg class="a" style="left:941px;top:351px;" width="16" height="16" viewBox="0 0 16 16"><g transform="translate(8 8) scale(0.75) translate(-8 -8)"><path d="M10 3H5a3 3 0 0 0-3 3v4a3 3 0 0 0 3 3h5" fill="none" stroke="#333"/><path d="M11 5v6" stroke="#1e88e5" stroke-dasharray="1.5 1"/></g></svg>
<svg class="a" style="left:941px;top:368px;" width="16" height="16" viewBox="0 0 16 16"><g transform="translate(8 8) scale(0.75) translate(-8 -8)"><path d="M10 3H5a3 3 0 0 0-3 3v4a3 3 0 0 0 3 3h5" fill="none" stroke="#333"/><path d="M11 5v6" stroke="#1e88e5" stroke-dasharray="1.5 1"/></g></svg>
<svg class="a" style="left:941px;top:386px;" width="16" height="16" viewBox="0 0 16 16"><g transform="translate(8 8) scale(0.75) translate(-8 -8)"><path d="M1 8h5M10 8h5M4 6l2 2-2 2M12 6l-2 2 2 2" fill="none" stroke="#1e88e5" stroke-width="1.3"/></g></svg>
<svg class="a" style="left:941px;top:403px;" width="16" height="16" viewBox="0 0 16 16"><g transform="translate(8 8) scale(0.75) translate(-8 -8)"><path d="M2 3h12" stroke="#333"/><path d="M8 4v10" stroke="#333" stroke-dasharray="1.5 1.5"/></g></svg>
<svg class="a" style="left:941px;top:420px;" width="16" height="16" viewBox="0 0 16 16"><g transform="translate(8 8) scale(0.75) translate(-8 -8)"><circle cx="4" cy="5" r="2" fill="none" stroke="#333"/><circle cx="4" cy="11" r="2" fill="none" stroke="#333"/><path d="M6 6l8 6M6 10l8-6" stroke="#333"/><path d="M9 3v10" stroke="#5b9bd5" stroke-dasharray="1 1"/></g></svg>
<svg class="a" style="left:941px;top:438px;" width="16" height="16" viewBox="0 0 16 16"><g transform="translate(8 8) scale(0.75) translate(-8 -8)"><path d="M3 13V4h9M5 13V6h7M7 13V8h5" fill="none" stroke="#5b9bd5"/></g></svg>
<svg class="a" style="left:941px;top:454px;" width="16" height="16" viewBox="0 0 16 16"><g transform="translate(8 8) scale(0.75) translate(-8 -8)"><path d="M2 8h12" stroke="#1e88e5" stroke-width="1.2"/><path d="M8 2v5M8 10v5" stroke="#333"/><circle cx="8" cy="8" r="1.5" fill="#333"/></g></svg>
<svg class="a" style="left:941px;top:472px;" width="16" height="16" viewBox="0 0 16 16"><g transform="translate(8 8) scale(0.75) translate(-8 -8)"><path d="M2 5c2-3 9-4 13-2l-2 2H7z" fill="#c9935a"/><rect x="2.5" y="5.5" width="11" height="9" fill="#cfe3f7" stroke="#1e5f9f"/><path d="M3 12l4-4 6 5" stroke="#5b9bd5" fill="none"/></g></svg>
<svg class="a" style="left:941px;top:490px;" width="16" height="16" viewBox="0 0 16 16"><g transform="translate(8 8) scale(0.75) translate(-8 -8)"><rect x="2" y="2" width="9" height="9" fill="#f5b800" stroke="#7a5c00"/><rect x="5" y="5" width="9" height="9" fill="none" stroke="#555"/></g></svg>
<svg class="a" style="left:941px;top:507px;" width="16" height="16" viewBox="0 0 16 16"><g transform="translate(8 8) scale(0.75) translate(-8 -8)"><path d="M2 6c2-3 9-4 13-2l-2 2H7z" fill="#c9935a" stroke="#8d6a3e" stroke-width=".5"/><path d="M3 8c0 4 4 6 8 6" fill="none" stroke="#333"/><circle cx="6" cy="12" r="1.5" fill="#fff" stroke="#c8961e"/></g></svg>
<svg class="a" style="left:941px;top:524px;" width="16" height="16" viewBox="0 0 16 16"><g transform="translate(8 8) scale(0.75) translate(-8 -8)"><rect x="2.5" y="2.5" width="11" height="11" fill="#b3d4f5" stroke="#1e5f9f"/><rect x="4.5" y="4.5" width="7" height="7" fill="#1e88e5"/></g></svg>
<svg class="a" style="left:941px;top:541px;" width="16" height="16" viewBox="0 0 16 16"><g transform="translate(8 8) scale(0.75) translate(-8 -8)"><path d="M1 8h14" stroke="#5b9bd5" stroke-dasharray="1.5 1"/><circle cx="8" cy="8" r="3" fill="#e65100"/><path d="M8 3v10M3 8h10" stroke="#d32f2f" stroke-width="1"/></g></svg>
<svg class="a" style="left:945px;top:562px;" width="8" height="8" viewBox="0 0 8 8"><path d="M1.5 1.5l2.5 2 2.5-2M1.5 4.5l2.5 2 2.5-2" fill="none" stroke="#111" stroke-width="1.2"/></svg>
<div class="a" style="left:939px;top:569px;width:20px;height:1px;background:#cfcfcf"></div>
<div class="a" style="left:0px;top:593px;width:960px;height:27px;background:#233142"></div>
<div class="a" style="left:0px;top:593px;width:33px;height:27px;background:#1e3440"></div>
<svg class="a" style="left:10px;top:600px;" width="13" height="12" viewBox="0 0 13 12"><path d="M0 1.5l5-.7V5.5H0zM6 .6L12.5 0V5.5H6zM0 6.5h5v4.7l-5-.7zM6 6.5h6.5V12L6 11.3z" fill="#fff"/></svg>
<div class="a" style="left:33px;top:593px;width:229px;height:27px;background:#f2f2f2"></div>
<svg class="a" style="left:40px;top:599px;" width="13" height="13" viewBox="0 0 13 13"><circle cx="7.5" cy="5.5" r="4" fill="none" stroke="#222" stroke-width="1.2"/><path d="M4.6 8.4L1 12" stroke="#222" stroke-width="1.4"/></svg>
<div class="t" style="left:59px;top:601.80px;font-size:9.6px;color:#333">Type here to search</div>
<svg class="a" style="left:271px;top:600px;" width="13" height="13" viewBox="0 0 13 13"><rect x="1.5" y="2.5" width="8" height="8" fill="none" stroke="#fff"/><path d="M0 1h11M0 12h11M12 3v7" stroke="#fff"/></svg>
<svg class="a" style="left:304px;top:598px;" width="16" height="16" viewBox="0 0 16 16"><path d="M14.5 9.5H4.8c.3 2.8 2.4 4.3 5 4.3 1.7 0 3.2-.5 4.3-1.3v2.6c-1.2.7-2.9 1.1-4.8 1.1C4.6 16.2 1.6 13 1.6 8.5 1.6 4 4.8.6 9 .6c3.6 0 5.9 2.6 5.9 6.5zM4.9 7h6.7c0-1.9-1.2-3.3-3.2-3.3S5.3 5 4.9 7z" fill="#1e88e5"/></svg>
<svg class="a" style="left:336px;top:598px;" width="17" height="15" viewBox="0 0 17 15"><path d="M1 2h6l1.5 2H16v10H1z" fill="#f2c230"/><path d="M1 6h15v8H1z" fill="#fbd75b"/><rect x="5" y="9" width="7" height="4" fill="#3f8fd2"/></svg>
<div class="a" style="left:331px;top:618px;width:27px;height:2px;background:#8cc0ea"></div>
<svg class="a" style="left:369px;top:598px;" width="15" height="16" viewBox="0 0 15 16"><path d="M1 4h13v11H1z" fill="#fff"/><path d="M4.5 4a3 3 0 0 1 6 0" fill="none" stroke="#fff" stroke-width="1.2"/><rect x="4" y="7" width="3" height="3" fill="#f25022"/><rect x="8" y="7" width="3" height="3" fill="#7fba00"/><rect x="4" y="11" width="3" height="3" fill="#00a4ef"/><rect x="8" y="11" width="3" height="3" fill="#ffb900"/></svg>
<svg class="a" style="left:400px;top:600px;" width="17" height="12" viewBox="0 0 17 12"><path d="M0 3l8.5-3L17 3v9H0z" fill="#fff"/><path d="M0 3l8.5 5L17 3" fill="none" stroke="#233142" stroke-width="1.2"/></svg>
<svg class="a" style="left:432px;top:599px;" width="18" height="14" viewBox="0 0 18 14"><rect x="0.5" y="0.5" width="17" height="13" fill="#0c0c0c" stroke="#b0b0b0"/><rect x="1" y="1" width="16" height="2" fill="#ddd"/><path d="M3 6h5M9 6h3" stroke="#aaa" stroke-width=".8"/></svg>
<div class="a" style="left:429px;top:618px;width:26px;height:2px;background:#8cc0ea"></div>
<svg class="a" style="left:465px;top:597px;" width="18" height="17" viewBox="0 0 18 17"><path d="M6 1l9 2-3 12-10-3z" fill="#f4f7f9"/><path d="M5 2l8 2-3 10-8-2.5z" fill="#5fb0d8"/><path d="M6 3l6 1.5-2.2 8.5-6-2z" fill="#a9dcf0"/></svg>
<div class="a" style="left:461px;top:618px;width:26px;height:2px;background:#8cc0ea"></div>
<div class="a" style="left:491px;top:593px;width:32px;height:27px;background:#48525e"></div>
<svg class="a" style="left:498px;top:596px;" width="18" height="19" viewBox="0 0 18 19"><path d="M10 1l6 11h-6z" fill="none" stroke="#9cc4cc" stroke-width="1.3"/><path d="M2 3h4c4 0 5.5 2.5 5 5s-2.5 4-6 4H4z" fill="#7cc242"/><path d="M5 5.5h1c2 .3 2.5 2 2 3.5-.3 1-1 1.3-2 1.3H6z" fill="#48525e"/><rect x="2" y="12.5" width="14" height="6" fill="#111"/><text x="2.5" y="18" font-size="5.5" font-weight="bold" font-family="Liberation Sans" fill="#fff">2019</text></svg>
<div class="a" style="left:491px;top:618px;width:32px;height:2px;background:#8cc0ea"></div>
<svg class="a" style="left:808px;top:602px;" width="12" height="8" viewBox="0 0 12 8"><path d="M1 7l5-5 5 5" fill="none" stroke="#fff" stroke-width="1.1"/></svg>
<svg class="a" style="left:823px;top:600px;" width="13" height="13" viewBox="0 0 13 13"><rect x="1.5" y="1.5" width="10" height="7" fill="none" stroke="#fff"/><path d="M6.5 9v2M3 11.5h7" stroke="#fff"/><rect x="0" y="0" width="4" height="5" fill="#233142" stroke="#fff" stroke-width=".8"/></svg>
<svg class="a" style="left:839px;top:600px;" width="13" height="12" viewBox="0 0 13 12"><path d="M1 4h2l3-3v10L3 8H1z" fill="none" stroke="#fff"/><path d="M8 4a2.5 2.5 0 0 1 0 4M9.5 2.5a5 5 0 0 1 0 7M11 1a7 7 0 0 1 0 10" fill="none" stroke="#fff" stroke-width=".8"/></svg>
<div class="t" style="left:857px;top:602.38px;font-size:8.4px;color:#fff">NLD</div>
<div class="t" style="left:901px;top:596.37px;font-size:7.4px;transform:translateX(-50%);color:#fff">15:07</div>
<div class="t" style="left:901px;top:607.78px;font-size:7.6px;transform:translateX(-50%);color:#fff">20/09/2019</div>
<svg class="a" style="left:932px;top:600px;" width="16" height="15" viewBox="0 0 16 15"><path d="M1 1h11v8H6l-3 3V9H1z" fill="#fff"/><path d="M3 3h7M3 5h7M3 7h5" stroke="#aaa" stroke-width=".6"/><circle cx="11" cy="10.5" r="4" fill="#233142" stroke="#fff" stroke-width=".9"/><text x="9" y="13" font-size="6" font-family="Liberation Sans" fill="#fff">6</text></svg>
<div class="a" style="left:956px;top:594px;width:1px;height:26px;background:#5a6672"></div>
<div class="a" style="left:352px;top:218px;width:256px;height:156px;background:#f0f0f0;border:1px solid #fafafa"></div>
<div class="a" style="left:353px;top:219px;width:254px;height:19px;background:#fff"></div>
<svg class="a" style="left:357px;top:222px;" width="12" height="12" viewBox="0 0 12 12"><path d="M2 8V3M4 7V2M6 8V4" stroke="#8bc34a" stroke-width="1"/><rect x="0" y="8" width="12" height="4" fill="#222"/><rect x="1.5" y="9.5" width="1.5" height="1.5" fill="#fff"/><rect x="4.5" y="9.5" width="1.5" height="1.5" fill="#fff"/><rect x="7.5" y="9.5" width="1.5" height="1.5" fill="#fff"/></svg>
<div class="t" style="left:372px;top:225.73px;font-size:8.3px;color:#1a1a1a">Add-in properties</div>
<svg class="a" style="left:592px;top:223px;" width="10" height="10" viewBox="0 0 10 10"><path d="M1 1l8 8M9 1l-8 8" stroke="#c8c8c8" stroke-width="1"/></svg>
<div class="t" style="left:366px;top:257.42px;font-size:7.3px;color:#222">CLSID:</div>
<div class="t" style="left:366px;top:275.42px;font-size:7.3px;color:#222">DLL path:</div>
<div class="t" style="left:366px;top:292.42px;font-size:7.3px;color:#222">Name:</div>
<div class="t" style="left:366px;top:309.42px;font-size:7.3px;color:#222">Help string:</div>
<div class="t" style="left:366px;top:328.42px;font-size:7.3px;color:#222">Pixmap:</div>
<div class="a" style="left:407px;top:253px;width:187px;height:14px;background:#fff;border:1px solid #b5b5b5"></div>
<div class="a" style="left:407px;top:271px;width:187px;height:13px;background:#fff;border:1px solid #b5b5b5"></div>
<div class="a" style="left:408px;top:272px;width:185px;height:11px;overflow:hidden"><div class="t" style="right:1px;top:2.2px;font-size:7.3px;color:#222">C:\Users\d.vanschoorisse\Desktop\Debug\DockControl.dll</div></div>
<div class="a" style="left:407px;top:288px;width:187px;height:13px;background:#fff;border:1px solid #b5b5b5"></div>
<div class="a" style="left:409px;top:290px;width:48px;height:9px;background:#3478c8"></div>
<div class="t" style="left:409px;top:291.72px;font-size:7.3px;color:#fff">DockControl.dll</div>
<div class="a" style="left:407px;top:305px;width:187px;height:14px;background:#fff;border:1px solid #b5b5b5"></div>
<div class="a" style="left:407px;top:324px;width:164px;height:13px;background:#fff;border:1px solid #b5b5b5"></div>
<div class="a" style="left:576px;top:323px;width:17px;height:15px;background:#e3e3e3;border:1px solid #b5b5b5"></div>
<svg class="a" style="left:578px;top:325px;" width="13" height="11" viewBox="0 0 13 11"><path d="M1 2h4l1 1.5h6V10H1z" fill="#f2c230"/><path d="M2.5 5H12l-1.5 5H1z" fill="#fbd75b"/></svg>
<div class="a" style="left:490px;top:343px;width:50px;height:14px;background:#e5f1fb;border:1px solid #0078d7"></div>
<svg class="a" style="left:502px;top:345px;" width="12" height="10" viewBox="0 0 12 10"><path d="M1 5l3.5 3.5L11 1.5" fill="none" stroke="#2e9e2e" stroke-width="2"/></svg>
<div class="t" style="left:516px;top:347.72px;font-size:7.3px;color:#222">OK</div>
<div class="a" style="left:544px;top:343px;width:49px;height:14px;background:#e1e1e1;border:1px solid #adadad"></div>
<svg class="a" style="left:548px;top:344px;" width="12" height="12" viewBox="0 0 12 12"><path d="M1.5 1.5l9 9M10.5 1.5l-9 9" stroke="#d32f2f" stroke-width="2"/></svg>
<div class="t" style="left:564px;top:347.72px;font-size:7.3px;color:#222">Cancel</div>
</body></html>
